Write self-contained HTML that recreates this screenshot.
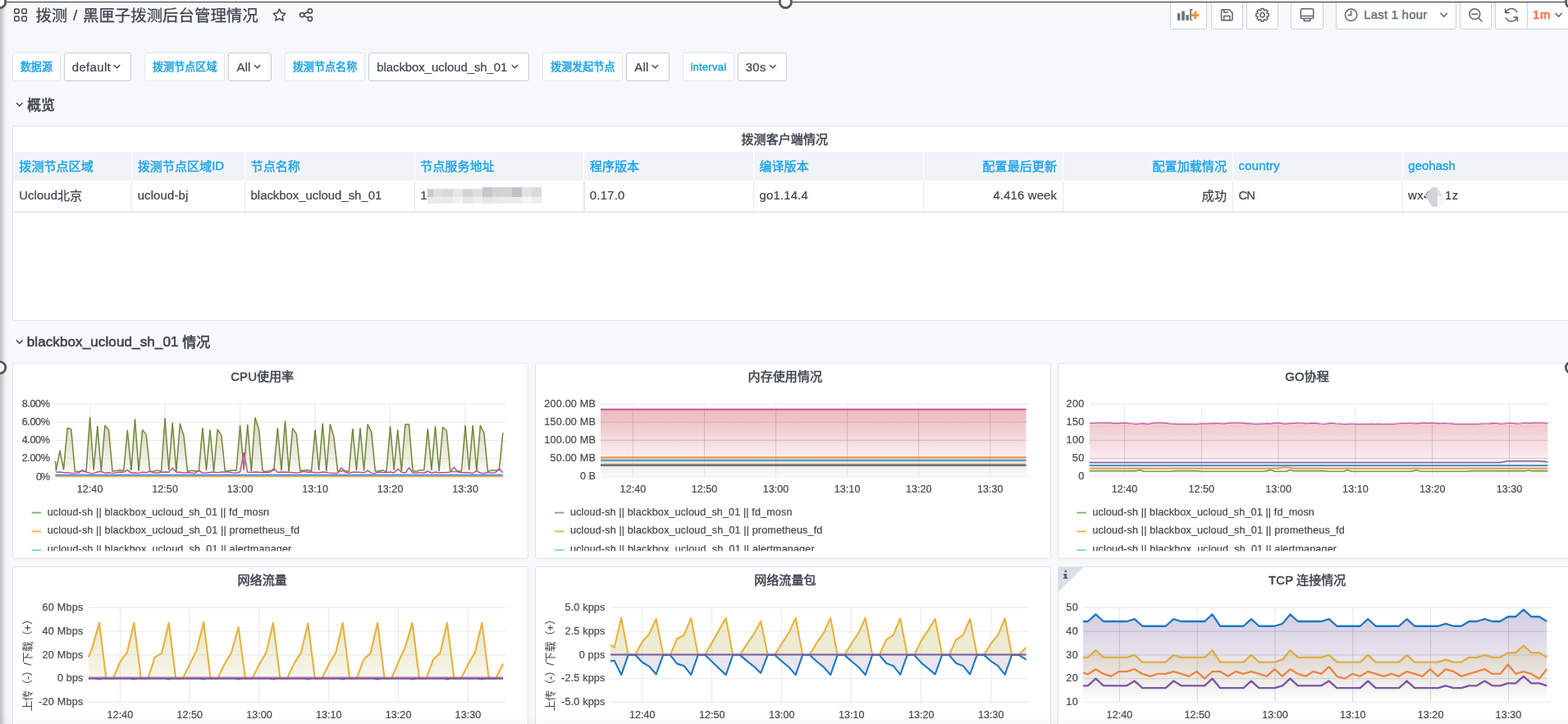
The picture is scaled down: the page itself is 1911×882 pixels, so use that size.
<!DOCTYPE html>
<html lang="zh"><head><meta charset="utf-8"><title>拨测 / 黑匣子拨测后台管理情况 - Grafana</title><style>
html,body{margin:0;padding:0;width:1911px;height:882px;overflow:hidden}
body{width:1911px;height:882px;overflow:hidden;background:#f7f8fa;font-family:"Liberation Sans","Noto Sans CJK SC",sans-serif;color:#464c54;position:relative}
#app{position:absolute;left:0;top:0;width:1911px;height:882px;overflow:hidden}
div,span,header,section,nav,button,table{box-sizing:border-box}
.ov{position:absolute;left:0;top:0;overflow:visible;will-change:transform}
svg text{font-family:"Liberation Sans","Noto Sans CJK SC",sans-serif}
.box{position:absolute}
.panel{position:absolute;background:#fff;border:1px solid #dfe4eb;border-radius:3px}
.panel>.ov,.btn>.ov,.vlabel>.ov,.vdrop>.ov{left:-1px;top:-1px}
.btn{position:absolute;background:#fff;border:1px solid #c9d2dc;border-radius:3px}
.vlabel{position:absolute;background:#fff;border:1px solid #e0e6ee;border-radius:3px}
.vdrop{position:absolute;background:#fff;border:1px solid #c3ccd6;border-radius:3px}
.th{position:absolute;background:#f0f4f9}
.td{position:absolute}
</style></head><body>
<div id="app">

<header class="box" style="left:0.00px;top:3.00px;width:1420.00px;height:40.00px;"><svg class="ov" width="1420.00" height="40.00" viewBox="0.00 3.00 1420.00 40.00"><rect x="17.70" y="10.90" width="5.4" height="5.4" rx="1.0" fill="none" stroke="#3f454e" stroke-width="1.45"/><rect x="26.90" y="10.90" width="5.4" height="5.4" rx="1.0" fill="none" stroke="#3f454e" stroke-width="1.45"/><rect x="17.70" y="20.00" width="5.4" height="5.4" rx="1.0" fill="none" stroke="#3f454e" stroke-width="1.45"/><rect x="26.90" y="20.00" width="5.4" height="5.4" rx="1.0" fill="none" stroke="#3f454e" stroke-width="1.45"/><text x="43.40" y="25.87" font-size="19.43" fill="#3f454e" textLength="38.86" lengthAdjust="spacing" stroke="#3f454e" stroke-width="0.25">拨测</text><text x="82.26" y="24.70" font-size="19.00" fill="#3f454e" textLength="18.71" lengthAdjust="spacing" stroke="#3f454e" stroke-width="0.22" xml:space="preserve" style="white-space:pre"> / </text><text x="100.97" y="25.87" font-size="19.43" fill="#3f454e" textLength="213.73" lengthAdjust="spacing" stroke="#3f454e" stroke-width="0.25">黑匣子拨测后台管理情况</text><path d="M340.50 11.10 L342.79 15.64 L347.82 16.42 L344.21 20.01 L345.03 25.03 L340.50 22.70 L335.97 25.03 L336.79 20.01 L333.18 16.42 L338.21 15.64Z" fill="none" stroke="#3f454e" stroke-width="1.5" stroke-linejoin="round"/><g fill="none" stroke="#3f454e" stroke-width="1.5"><circle cx="377.9" cy="13.4" r="2.6"/><circle cx="368.1" cy="18.1" r="2.6"/><circle cx="377.9" cy="22.9" r="2.6"/><path d="M370.4 17L375.6 14.5M370.4 19.2L375.6 21.8"/></g></svg></header>
<button class="btn" style="left:1426.00px;top:1.00px;width:45.00px;height:35.00px;"><svg class="ov" width="45.00" height="35.00" viewBox="1426.00 1.00 45.00 35.00"><rect x="1435.00" y="16.20" width="3.40" height="8.60" fill="#6b727d"/><rect x="1440.20" y="13.60" width="3.60" height="11.20" fill="#6b727d"/><rect x="1445.40" y="18.30" width="3.40" height="6.50" fill="#6b727d"/><rect x="1450.10" y="11.00" width="3.30" height="13.80" fill="#6b727d"/><rect x="1451.9" y="12.6" width="10" height="11.4" fill="#fff"/><linearGradient id="gpl" x1="0" y1="0" x2="1" y2="0"><stop offset="0" stop-color="#ff7f27"/><stop offset="1" stop-color="#f9a83a"/></linearGradient><path d="M1455.3 13.8h3.1v3.1h3.1v3.1h-3.1v3.1h-3.1v-3.1h-3.1v-3.1h3.1z" fill="url(#gpl)"/></svg></button>
<button class="btn" style="left:1476.00px;top:1.00px;width:39.00px;height:35.00px;"><svg class="ov" width="39.00" height="35.00" viewBox="1476.00 1.00 39.00 35.00"><g fill="none" stroke="#5b626d" stroke-width="1.5" stroke-linejoin="round"><path d="M1489.4 11.8H1498.2L1502 15.6V23.9a.8.8 0 0 1-.8.8H1489.4a.8.8 0 0 1-.8-.8V12.6a.8.8 0 0 1 .8-.8Z"/><path d="M1491.6 24.6V19.6H1499V24.6M1491.6 12V14.9H1496.6"/></g></svg></button>
<button class="btn" style="left:1519.00px;top:1.00px;width:39.00px;height:35.00px;"><svg class="ov" width="39.00" height="35.00" viewBox="1519.00 1.00 39.00 35.00"><g fill="none" stroke="#5b626d" stroke-width="1.5" stroke-linejoin="round"><path d="M1546.24 16.63 L1546.24 19.77 L1544.20 20.09 L1543.86 20.89 L1545.08 22.56 L1542.86 24.78 L1541.19 23.56 L1540.39 23.90 L1540.07 25.94 L1536.93 25.94 L1536.61 23.90 L1535.81 23.56 L1534.14 24.78 L1531.92 22.56 L1533.14 20.89 L1532.80 20.09 L1530.76 19.77 L1530.76 16.63 L1532.80 16.31 L1533.14 15.51 L1531.92 13.84 L1534.14 11.62 L1535.81 12.84 L1536.61 12.50 L1536.93 10.46 L1540.07 10.46 L1540.39 12.50 L1541.19 12.84 L1542.86 11.62 L1545.08 13.84 L1543.86 15.51 L1544.20 16.31Z"/><circle cx="1538.5" cy="18.2" r="2.7"/></g></svg></button>
<button class="btn" style="left:1573.00px;top:1.00px;width:40.00px;height:35.00px;"><svg class="ov" width="40.00" height="35.00" viewBox="1573.00 1.00 40.00 35.00"><g fill="none" stroke="#5b626d" stroke-width="1.5" stroke-linejoin="round"><rect x="1585.3" y="10.8" width="15.4" height="11.8" rx="1.6"/><path d="M1585.3 19.6H1600.7M1589.4 22.6V25.4H1596.6V22.6"/></g></svg></button>
<button class="btn" style="left:1628.00px;top:1.00px;width:147.00px;height:35.00px;"><svg class="ov" width="147.00" height="35.00" viewBox="1628.00 1.00 147.00 35.00"><g fill="none" stroke="#5b626d" stroke-width="1.5" stroke-linecap="round"><circle cx="1646.6" cy="18.2" r="7.2"/><path d="M1646.6 13.6V18.4H1643.2"/></g><text x="1662.20" y="22.90" font-size="15.00" fill="#6b7280" textLength="77.00" lengthAdjust="spacing" stroke="#6b7280" stroke-width="0.55" xml:space="preserve" style="white-space:pre">Last 1 hour</text><path d="M1755.90 16.20 L1759.70 20.20 L1763.50 16.20" fill="none" stroke="#5b626d" stroke-width="1.50" stroke-linecap="round" stroke-linejoin="round"/></svg></button>
<button class="btn" style="left:1779.00px;top:1.00px;width:39.00px;height:35.00px;"><svg class="ov" width="39.00" height="35.00" viewBox="1779.00 1.00 39.00 35.00"><g fill="none" stroke="#5b626d" stroke-width="1.5" stroke-linecap="round"><circle cx="1797.3" cy="17.2" r="6.4"/><path d="M1793.9 17.2H1800.7M1802 22L1805.8 25.8"/></g></svg></button>
<button class="btn" style="left:1822.00px;top:1.00px;width:98.00px;height:35.00px;"><svg class="ov" width="98.00" height="35.00" viewBox="1822.00 1.00 98.00 35.00"><g fill="none" stroke="#5b626d" stroke-width="1.5" stroke-linecap="round" stroke-linejoin="round"><path d="M1835.3 15.2A7.2 7.2 0 0 1 1848.6 14.6M1848.7 21.2A7.2 7.2 0 0 1 1835.4 21.8"/><path d="M1834.6 10.9V15.4H1839.1M1849.4 25.5V21H1844.9"/></g><path d="M1861.4 0V36" stroke="#c9d2dc" stroke-width="1"/><text x="1868.00" y="23.20" font-size="15.00" fill="#ff6b3d" textLength="21.60" lengthAdjust="spacing" stroke="#ff6b3d" stroke-width="0.55" xml:space="preserve" style="white-space:pre">1m</text><path d="M1895.80 16.30 L1899.60 20.30 L1903.40 16.30" fill="none" stroke="#5b626d" stroke-width="1.50" stroke-linecap="round" stroke-linejoin="round"/></svg></button>
<div class="vlabel" style="left:15.00px;top:64.00px;width:59.00px;height:35.00px;"><svg class="ov" width="59.00" height="35.00" viewBox="15.00 64.00 59.00 35.00"><text x="24.70" y="85.69" font-size="13.10" fill="#21a3e8" textLength="39.30" lengthAdjust="spacing" stroke="#21a3e8" stroke-width="0.50">数据源</text></svg></div>
<div class="vdrop" style="left:78.00px;top:64.00px;width:82.00px;height:35.00px;"><svg class="ov" width="82.00" height="35.00" viewBox="78.00 64.00 82.00 35.00"><text x="87.80" y="86.60" font-size="14.90" fill="#3f454e" textLength="46.90" lengthAdjust="spacing" stroke="#3f454e" stroke-width="0.22" xml:space="preserve" style="white-space:pre">default</text><path d="M139.30 79.55 L142.60 82.85 L145.90 79.55" fill="none" stroke="#3f454e" stroke-width="1.35" stroke-linecap="round" stroke-linejoin="round"/></svg></div>
<div class="vlabel" style="left:176.00px;top:64.00px;width:98.00px;height:35.00px;"><svg class="ov" width="98.00" height="35.00" viewBox="176.00 64.00 98.00 35.00"><text x="185.90" y="85.69" font-size="13.10" fill="#21a3e8" textLength="78.60" lengthAdjust="spacing" stroke="#21a3e8" stroke-width="0.50">拨测节点区域</text></svg></div>
<div class="vdrop" style="left:278.00px;top:64.00px;width:53.00px;height:35.00px;"><svg class="ov" width="53.00" height="35.00" viewBox="278.00 64.00 53.00 35.00"><text x="288.40" y="86.60" font-size="14.90" fill="#3f454e" textLength="16.90" lengthAdjust="spacing" stroke="#3f454e" stroke-width="0.22" xml:space="preserve" style="white-space:pre">All</text><path d="M310.20 79.55 L313.50 82.85 L316.80 79.55" fill="none" stroke="#3f454e" stroke-width="1.35" stroke-linecap="round" stroke-linejoin="round"/></svg></div>
<div class="vlabel" style="left:347.00px;top:64.00px;width:98.00px;height:35.00px;"><svg class="ov" width="98.00" height="35.00" viewBox="347.00 64.00 98.00 35.00"><text x="356.70" y="85.69" font-size="13.10" fill="#21a3e8" textLength="78.60" lengthAdjust="spacing" stroke="#21a3e8" stroke-width="0.50">拨测节点名称</text></svg></div>
<div class="vdrop" style="left:449.00px;top:64.00px;width:196.00px;height:35.00px;"><svg class="ov" width="196.00" height="35.00" viewBox="449.00 64.00 196.00 35.00"><text x="459.20" y="86.60" font-size="14.90" fill="#3f454e" textLength="159.20" lengthAdjust="spacing" stroke="#3f454e" stroke-width="0.22" xml:space="preserve" style="white-space:pre">blackbox_ucloud_sh_01</text><path d="M624.10 79.55 L627.40 82.85 L630.70 79.55" fill="none" stroke="#3f454e" stroke-width="1.35" stroke-linecap="round" stroke-linejoin="round"/></svg></div>
<div class="vlabel" style="left:661.00px;top:64.00px;width:98.00px;height:35.00px;"><svg class="ov" width="98.00" height="35.00" viewBox="661.00 64.00 98.00 35.00"><text x="670.90" y="85.69" font-size="13.10" fill="#21a3e8" textLength="78.60" lengthAdjust="spacing" stroke="#21a3e8" stroke-width="0.50">拨测发起节点</text></svg></div>
<div class="vdrop" style="left:763.00px;top:64.00px;width:53.00px;height:35.00px;"><svg class="ov" width="53.00" height="35.00" viewBox="763.00 64.00 53.00 35.00"><text x="773.30" y="86.60" font-size="14.90" fill="#3f454e" textLength="16.90" lengthAdjust="spacing" stroke="#3f454e" stroke-width="0.22" xml:space="preserve" style="white-space:pre">All</text><path d="M795.10 79.55 L798.40 82.85 L801.70 79.55" fill="none" stroke="#3f454e" stroke-width="1.35" stroke-linecap="round" stroke-linejoin="round"/></svg></div>
<div class="vlabel" style="left:832.00px;top:64.00px;width:63.00px;height:35.00px;"><svg class="ov" width="63.00" height="35.00" viewBox="832.00 64.00 63.00 35.00"><text x="841.40" y="85.60" font-size="12.90" fill="#21a3e8" textLength="43.60" lengthAdjust="spacing" stroke="#21a3e8" stroke-width="0.50" xml:space="preserve" style="white-space:pre">interval</text></svg></div>
<div class="vdrop" style="left:899.00px;top:64.00px;width:60.00px;height:35.00px;"><svg class="ov" width="60.00" height="35.00" viewBox="899.00 64.00 60.00 35.00"><text x="908.80" y="86.60" font-size="14.90" fill="#3f454e" textLength="24.60" lengthAdjust="spacing" stroke="#3f454e" stroke-width="0.22" xml:space="preserve" style="white-space:pre">30s</text><path d="M938.60 79.55 L941.90 82.85 L945.20 79.55" fill="none" stroke="#3f454e" stroke-width="1.35" stroke-linecap="round" stroke-linejoin="round"/></svg></div>
<div class="box" style="left:15.00px;top:112.00px;width:600.00px;height:30.00px;"><svg class="ov" width="600.00" height="30.00" viewBox="15.00 112.00 600.00 30.00"><path d="M20.50 125.70 L23.80 129.10 L27.10 125.70" fill="none" stroke="#3f454e" stroke-width="1.50" stroke-linecap="round" stroke-linejoin="round"/><text x="33.00" y="133.62" font-size="17.00" fill="#3f454e" textLength="34.00" lengthAdjust="spacing" stroke="#3f454e" stroke-width="0.60">概览</text></svg></div>
<div class="box" style="left:15.00px;top:401.00px;width:600.00px;height:30.00px;"><svg class="ov" width="600.00" height="30.00" viewBox="15.00 401.00 600.00 30.00"><path d="M20.50 414.90 L23.80 418.30 L27.10 414.90" fill="none" stroke="#3f454e" stroke-width="1.50" stroke-linecap="round" stroke-linejoin="round"/><text x="32.70" y="422.10" font-size="17.00" fill="#3f454e" textLength="189.60" lengthAdjust="spacing" stroke="#3f454e" stroke-width="0.60" xml:space="preserve" style="white-space:pre">blackbox_ucloud_sh_01 </text><text x="222.30" y="423.12" font-size="17.00" fill="#3f454e" textLength="34.00" lengthAdjust="spacing" stroke="#3f454e" stroke-width="0.60">情况</text></svg></div>
<section class="panel" style="left:15.00px;top:153.00px;width:1906.00px;height:238.00px;"><div class="th" style="left:0.00px;top:30.60px;width:144.35px;height:35.60px"></div><div class="th" style="left:145.25px;top:30.60px;width:137.05px;height:35.60px"></div><div class="box" style="left:144.15px;top:66.80px;width:1.3px;height:36.50px;background:#e4e9f0"></div><div class="th" style="left:283.20px;top:30.60px;width:205.70px;height:35.60px"></div><div class="box" style="left:282.10px;top:66.80px;width:1.3px;height:36.50px;background:#e4e9f0"></div><div class="th" style="left:489.80px;top:30.60px;width:205.70px;height:35.60px"></div><div class="box" style="left:488.70px;top:66.80px;width:1.3px;height:36.50px;background:#e4e9f0"></div><div class="th" style="left:696.40px;top:30.60px;width:205.70px;height:35.60px"></div><div class="box" style="left:695.30px;top:66.80px;width:1.3px;height:36.50px;background:#e4e9f0"></div><div class="th" style="left:903.00px;top:30.60px;width:205.70px;height:35.60px"></div><div class="box" style="left:901.90px;top:66.80px;width:1.3px;height:36.50px;background:#e4e9f0"></div><div class="th" style="left:1109.60px;top:30.60px;width:169.60px;height:35.60px"></div><div class="box" style="left:1108.50px;top:66.80px;width:1.3px;height:36.50px;background:#e4e9f0"></div><div class="th" style="left:1280.10px;top:30.60px;width:206.10px;height:35.60px"></div><div class="box" style="left:1279.00px;top:66.80px;width:1.3px;height:36.50px;background:#e4e9f0"></div><div class="th" style="left:1487.10px;top:30.60px;width:205.90px;height:35.60px"></div><div class="box" style="left:1486.00px;top:66.80px;width:1.3px;height:36.50px;background:#e4e9f0"></div><div class="th" style="left:1693.90px;top:30.60px;width:206.10px;height:35.60px"></div><div class="box" style="left:1692.80px;top:66.80px;width:1.3px;height:36.50px;background:#e4e9f0"></div><div class="box" style="left:0;top:103.30px;width:100%;height:1.6px;background:#e6ebf1"></div><svg class="ov" width="1906.00" height="238.00" viewBox="15.00 153.00 1906.00 238.00"><text x="903.45" y="175.41" font-size="15.10" fill="#3f454e" textLength="105.70" lengthAdjust="spacing" stroke="#3f454e" stroke-width="0.50">拨测客户端情况</text><text x="23.30" y="207.60" font-size="15.08" fill="#21a3e8" textLength="90.48" lengthAdjust="spacing" stroke="#21a3e8" stroke-width="0.45">拨测节点区域</text><text x="23.30" y="242.80" font-size="14.90" fill="#3f454e" textLength="46.64" lengthAdjust="spacing" stroke="#3f454e" stroke-width="0.22" xml:space="preserve" style="white-space:pre">Ucloud</text><text x="69.94" y="243.70" font-size="15.08" fill="#3f454e" textLength="30.16" lengthAdjust="spacing" stroke="#3f454e" stroke-width="0.22">北京</text><text x="167.65" y="207.60" font-size="15.08" fill="#21a3e8" textLength="90.48" lengthAdjust="spacing" stroke="#21a3e8" stroke-width="0.45">拨测节点区域</text><text x="258.13" y="206.70" font-size="14.90" fill="#21a3e8" textLength="14.82" lengthAdjust="spacing" stroke="#21a3e8" stroke-width="0.45" xml:space="preserve" style="white-space:pre">ID</text><text x="167.65" y="242.80" font-size="14.90" fill="#3f454e" textLength="61.60" lengthAdjust="spacing" stroke="#3f454e" stroke-width="0.22" xml:space="preserve" style="white-space:pre">ucloud-bj</text><text x="305.60" y="207.60" font-size="15.08" fill="#21a3e8" textLength="60.32" lengthAdjust="spacing" stroke="#21a3e8" stroke-width="0.45">节点名称</text><text x="305.60" y="242.80" font-size="14.90" fill="#3f454e" textLength="159.60" lengthAdjust="spacing" stroke="#3f454e" stroke-width="0.22" xml:space="preserve" style="white-space:pre">blackbox_ucloud_sh_01</text><text x="512.20" y="207.60" font-size="15.08" fill="#21a3e8" textLength="90.48" lengthAdjust="spacing" stroke="#21a3e8" stroke-width="0.45">节点服务地址</text><text x="512.20" y="242.80" font-size="14.90" fill="#3f454e" stroke="#3f454e" stroke-width="0.22" xml:space="preserve" style="white-space:pre">1</text><text x="718.80" y="207.60" font-size="15.08" fill="#21a3e8" textLength="60.32" lengthAdjust="spacing" stroke="#21a3e8" stroke-width="0.45">程序版本</text><text x="718.80" y="242.80" font-size="14.90" fill="#3f454e" textLength="42.60" lengthAdjust="spacing" stroke="#3f454e" stroke-width="0.22" xml:space="preserve" style="white-space:pre">0.17.0</text><text x="925.40" y="207.60" font-size="15.08" fill="#21a3e8" textLength="60.32" lengthAdjust="spacing" stroke="#21a3e8" stroke-width="0.45">编译版本</text><text x="925.40" y="242.80" font-size="14.90" fill="#3f454e" textLength="59.40" lengthAdjust="spacing" stroke="#3f454e" stroke-width="0.22" xml:space="preserve" style="white-space:pre">go1.14.4</text><text x="1197.52" y="207.60" font-size="15.08" fill="#21a3e8" textLength="90.48" lengthAdjust="spacing" stroke="#21a3e8" stroke-width="0.45">配置最后更新</text><text x="1210.40" y="242.80" font-size="14.90" fill="#3f454e" textLength="77.60" lengthAdjust="spacing" stroke="#3f454e" stroke-width="0.22" xml:space="preserve" style="white-space:pre">4.416 week</text><text x="1404.52" y="207.60" font-size="15.08" fill="#21a3e8" textLength="90.48" lengthAdjust="spacing" stroke="#21a3e8" stroke-width="0.45">配置加载情况</text><text x="1464.84" y="243.70" font-size="15.08" fill="#3f454e" textLength="30.16" lengthAdjust="spacing" stroke="#3f454e" stroke-width="0.22">成功</text><text x="1509.50" y="206.70" font-size="14.90" fill="#21a3e8" textLength="50.20" lengthAdjust="spacing" stroke="#21a3e8" stroke-width="0.45" xml:space="preserve" style="white-space:pre">country</text><text x="1509.50" y="242.80" font-size="14.90" fill="#3f454e" textLength="20.60" lengthAdjust="spacing" stroke="#3f454e" stroke-width="0.22" xml:space="preserve" style="white-space:pre">CN</text><text x="1716.30" y="206.70" font-size="14.90" fill="#21a3e8" textLength="57.60" lengthAdjust="spacing" stroke="#21a3e8" stroke-width="0.45" xml:space="preserve" style="white-space:pre">geohash</text><text x="1716.00" y="242.80" font-size="14.90" fill="#3f454e" textLength="27.60" lengthAdjust="spacing" stroke="#3f454e" stroke-width="0.22" xml:space="preserve" style="white-space:pre">wx4</text><text x="1761.00" y="242.80" font-size="14.90" fill="#3f454e" textLength="16.20" lengthAdjust="spacing" stroke="#3f454e" stroke-width="0.22" xml:space="preserve" style="white-space:pre">1z</text><path d="M1745.4 228.2H1751.9V251.8H1745.4L1736.8 238.8Z" fill="#d2d3d6"/><path d="M1751.9 228.2L1759 239.4H1751.9Z" fill="#e3e4e6"/><path d="M1751.9 239.4H1759L1763 246L1752.4 254Z" fill="#f8f8f9"/><path d="M1736.8 238.8L1742.5 230.5L1745.4 228.2V238.8Z" fill="#d2d3d6" opacity=".55"/><rect x="520.90" y="230.20" width="7.15" height="9.95" fill="#c8c9cc"/><rect x="520.90" y="240.1" width="7.15" height="7.9" fill="#e8e9ea"/><rect x="528.00" y="230.20" width="12.05" height="9.95" fill="#dddee0"/><rect x="528.00" y="240.1" width="12.05" height="7.9" fill="#ebebec"/><rect x="540.00" y="230.20" width="12.05" height="9.95" fill="#d8d9db"/><rect x="540.00" y="240.1" width="12.05" height="7.9" fill="#e9eaeb"/><rect x="552.00" y="230.20" width="12.05" height="9.95" fill="#e6e7e9"/><rect x="552.00" y="240.1" width="12.05" height="7.9" fill="#f3f3f4"/><rect x="564.00" y="230.20" width="12.05" height="9.95" fill="#d3d4d7"/><rect x="564.00" y="240.1" width="12.05" height="7.9" fill="#e5e6e8"/><rect x="576.00" y="230.20" width="11.95" height="9.95" fill="#dedfe1"/><rect x="576.00" y="240.1" width="11.95" height="7.9" fill="#efeff0"/><rect x="587.90" y="228.10" width="12.15" height="12.05" fill="#c5c6ca"/><rect x="587.90" y="240.1" width="12.15" height="7.9" fill="#e4e5e7"/><rect x="600.00" y="228.10" width="12.05" height="12.05" fill="#d2d3d6"/><rect x="600.00" y="240.1" width="12.05" height="7.9" fill="#e8e9ea"/><rect x="612.00" y="228.10" width="12.05" height="12.05" fill="#d3d4d6"/><rect x="612.00" y="240.1" width="12.05" height="7.9" fill="#ececed"/><rect x="624.00" y="228.10" width="12.05" height="12.05" fill="#bfc3c7"/><rect x="624.00" y="240.1" width="12.05" height="7.9" fill="#ececed"/><rect x="636.00" y="228.10" width="11.95" height="12.05" fill="#e2e3e5"/><rect x="636.00" y="240.1" width="11.95" height="7.9" fill="#f6f6f7"/><rect x="647.90" y="228.10" width="12.05" height="12.05" fill="#d9dadc"/><rect x="647.90" y="240.1" width="12.05" height="7.9" fill="#ededee"/></svg></section>
<section class="panel" style="left:15.00px;top:442.00px;width:629.00px;height:239.00px;overflow:hidden;"><svg class="ov" width="629.00" height="239.00" viewBox="15.00 442.00 629.00 239.00"><text x="281.20" y="463.70" font-size="14.90" fill="#3f454e" textLength="31.76" lengthAdjust="spacing" stroke="#3f454e" stroke-width="0.50" xml:space="preserve" style="white-space:pre">CPU</text><text x="312.96" y="463.90" font-size="15.08" fill="#3f454e" textLength="45.24" lengthAdjust="spacing" stroke="#3f454e" stroke-width="0.50">使用率</text><path d="M67.35 492.00H616.80M67.35 514.20H616.80M67.35 536.45H616.80M67.35 558.70H616.80M67.35 580.90H616.80M109.60 492.00V580.90M201.10 492.00V580.90M292.60 492.00V580.90M384.10 492.00V580.90M475.60 492.00V580.90M567.10 492.00V580.90" stroke="#e7e8ea" stroke-width="1" fill="none"/><clipPath id="cp592"><rect x="66.35" y="489.00" width="551.45" height="94.90"/></clipPath><g clip-path="url(#cp592)"><linearGradient id="gcpu" gradientUnits="userSpaceOnUse" x1="0" y1="502.0" x2="0" y2="580.9"><stop offset="0" stop-color="#8a7a3a" stop-opacity=".36"/><stop offset="1" stop-color="#8a7a3a" stop-opacity=".03"/></linearGradient><path d="M67.55 561.79 L68.42 573.12 L73.00 549.01 L77.57 572.01 L82.15 521.23 L86.72 523.12 L91.30 574.23 L95.88 574.66 L100.45 573.66 L105.02 574.70 L109.60 508.67 L114.17 572.13 L118.75 519.45 L123.32 573.57 L127.90 518.34 L132.47 523.78 L137.05 574.29 L141.62 573.39 L146.20 572.68 L150.78 573.51 L155.35 524.23 L159.93 572.45 L164.50 510.89 L169.07 573.31 L173.65 523.78 L178.22 529.34 L182.80 574.53 L187.38 574.10 L191.95 572.97 L196.52 574.39 L201.10 509.89 L205.68 572.50 L210.25 515.34 L214.82 573.94 L219.40 516.11 L223.97 530.89 L228.55 574.33 L233.12 573.28 L237.70 573.84 L242.28 574.09 L246.85 521.67 L251.43 572.33 L256.00 523.89 L260.57 573.83 L265.15 523.12 L269.73 530.12 L274.30 573.51 L278.88 573.62 L283.45 572.84 L288.02 573.17 L292.60 518.67 L297.18 572.19 L301.75 517.56 L306.32 573.95 L310.90 509.00 L315.48 522.78 L320.05 573.70 L324.62 574.70 L329.20 573.30 L333.77 573.09 L338.35 521.89 L342.93 572.57 L347.50 513.11 L352.08 573.84 L356.65 521.89 L361.23 528.56 L365.80 573.77 L370.38 572.92 L374.95 572.69 L379.52 573.73 L384.10 524.00 L388.67 572.45 L393.25 516.34 L397.83 573.61 L402.40 517.11 L406.98 532.78 L411.55 574.16 L416.12 573.93 L420.70 573.30 L425.27 574.74 L429.85 522.67 L434.42 572.54 L439.00 521.89 L443.58 573.04 L448.15 517.11 L452.73 526.00 L457.30 574.24 L461.88 573.92 L466.45 572.85 L471.02 574.61 L475.60 519.67 L480.17 571.88 L484.75 523.89 L489.33 573.85 L493.90 517.11 L498.48 517.11 L503.05 573.87 L507.62 573.99 L512.20 572.82 L516.77 572.66 L521.35 522.67 L525.92 572.29 L530.50 519.67 L535.08 573.62 L539.65 520.45 L544.23 524.34 L548.80 574.20 L553.38 574.78 L557.95 573.86 L562.52 573.97 L567.10 518.45 L571.68 572.16 L576.25 518.45 L580.83 573.87 L585.40 518.45 L589.98 527.67 L594.55 574.67 L599.12 572.79 L603.70 573.05 L608.27 572.84 L612.85 527.23 L612.85 580.90 L67.55 580.90 Z" fill="url(#gcpu)"/><path d="M67.55 561.79 L68.42 573.12 L73.00 549.01 L77.57 572.01 L82.15 521.23 L86.72 523.12 L91.30 574.23 L95.88 574.66 L100.45 573.66 L105.02 574.70 L109.60 508.67 L114.17 572.13 L118.75 519.45 L123.32 573.57 L127.90 518.34 L132.47 523.78 L137.05 574.29 L141.62 573.39 L146.20 572.68 L150.78 573.51 L155.35 524.23 L159.93 572.45 L164.50 510.89 L169.07 573.31 L173.65 523.78 L178.22 529.34 L182.80 574.53 L187.38 574.10 L191.95 572.97 L196.52 574.39 L201.10 509.89 L205.68 572.50 L210.25 515.34 L214.82 573.94 L219.40 516.11 L223.97 530.89 L228.55 574.33 L233.12 573.28 L237.70 573.84 L242.28 574.09 L246.85 521.67 L251.43 572.33 L256.00 523.89 L260.57 573.83 L265.15 523.12 L269.73 530.12 L274.30 573.51 L278.88 573.62 L283.45 572.84 L288.02 573.17 L292.60 518.67 L297.18 572.19 L301.75 517.56 L306.32 573.95 L310.90 509.00 L315.48 522.78 L320.05 573.70 L324.62 574.70 L329.20 573.30 L333.77 573.09 L338.35 521.89 L342.93 572.57 L347.50 513.11 L352.08 573.84 L356.65 521.89 L361.23 528.56 L365.80 573.77 L370.38 572.92 L374.95 572.69 L379.52 573.73 L384.10 524.00 L388.67 572.45 L393.25 516.34 L397.83 573.61 L402.40 517.11 L406.98 532.78 L411.55 574.16 L416.12 573.93 L420.70 573.30 L425.27 574.74 L429.85 522.67 L434.42 572.54 L439.00 521.89 L443.58 573.04 L448.15 517.11 L452.73 526.00 L457.30 574.24 L461.88 573.92 L466.45 572.85 L471.02 574.61 L475.60 519.67 L480.17 571.88 L484.75 523.89 L489.33 573.85 L493.90 517.11 L498.48 517.11 L503.05 573.87 L507.62 573.99 L512.20 572.82 L516.77 572.66 L521.35 522.67 L525.92 572.29 L530.50 519.67 L535.08 573.62 L539.65 520.45 L544.23 524.34 L548.80 574.20 L553.38 574.78 L557.95 573.86 L562.52 573.97 L567.10 518.45 L571.68 572.16 L576.25 518.45 L580.83 573.87 L585.40 518.45 L589.98 527.67 L594.55 574.67 L599.12 572.79 L603.70 573.05 L608.27 572.84 L612.85 527.23" fill="none" stroke="#b3a352" stroke-opacity=".85" stroke-width="1.7" stroke-linejoin="round"/><path d="M67.55 561.79 L68.42 573.12 L73.00 549.01 L77.57 572.01 L82.15 521.23 L86.72 523.12 L91.30 574.23 L95.88 574.66 L100.45 573.66 L105.02 574.70 L109.60 508.67 L114.17 572.13 L118.75 519.45 L123.32 573.57 L127.90 518.34 L132.47 523.78 L137.05 574.29 L141.62 573.39 L146.20 572.68 L150.78 573.51 L155.35 524.23 L159.93 572.45 L164.50 510.89 L169.07 573.31 L173.65 523.78 L178.22 529.34 L182.80 574.53 L187.38 574.10 L191.95 572.97 L196.52 574.39 L201.10 509.89 L205.68 572.50 L210.25 515.34 L214.82 573.94 L219.40 516.11 L223.97 530.89 L228.55 574.33 L233.12 573.28 L237.70 573.84 L242.28 574.09 L246.85 521.67 L251.43 572.33 L256.00 523.89 L260.57 573.83 L265.15 523.12 L269.73 530.12 L274.30 573.51 L278.88 573.62 L283.45 572.84 L288.02 573.17 L292.60 518.67 L297.18 572.19 L301.75 517.56 L306.32 573.95 L310.90 509.00 L315.48 522.78 L320.05 573.70 L324.62 574.70 L329.20 573.30 L333.77 573.09 L338.35 521.89 L342.93 572.57 L347.50 513.11 L352.08 573.84 L356.65 521.89 L361.23 528.56 L365.80 573.77 L370.38 572.92 L374.95 572.69 L379.52 573.73 L384.10 524.00 L388.67 572.45 L393.25 516.34 L397.83 573.61 L402.40 517.11 L406.98 532.78 L411.55 574.16 L416.12 573.93 L420.70 573.30 L425.27 574.74 L429.85 522.67 L434.42 572.54 L439.00 521.89 L443.58 573.04 L448.15 517.11 L452.73 526.00 L457.30 574.24 L461.88 573.92 L466.45 572.85 L471.02 574.61 L475.60 519.67 L480.17 571.88 L484.75 523.89 L489.33 573.85 L493.90 517.11 L498.48 517.11 L503.05 573.87 L507.62 573.99 L512.20 572.82 L516.77 572.66 L521.35 522.67 L525.92 572.29 L530.50 519.67 L535.08 573.62 L539.65 520.45 L544.23 524.34 L548.80 574.20 L553.38 574.78 L557.95 573.86 L562.52 573.97 L567.10 518.45 L571.68 572.16 L576.25 518.45 L580.83 573.87 L585.40 518.45 L589.98 527.67 L594.55 574.67 L599.12 572.79 L603.70 573.05 L608.27 572.84 L612.85 527.23" fill="none" stroke="#4d803a" stroke-width="0.9" stroke-linejoin="round"/><path d="M68.42 575.17 L73.00 574.91 L77.57 575.85 L82.15 575.82 L86.72 576.52 L91.30 576.50 L95.88 576.07 L100.45 572.57 L105.02 575.20 L109.60 576.39 L114.17 576.64 L118.75 574.99 L123.32 574.23 L127.90 576.42 L132.47 575.71 L137.05 576.63 L141.62 575.74 L146.20 574.94 L150.78 575.14 L155.35 572.57 L159.93 576.21 L164.50 576.03 L169.07 576.38 L173.65 575.30 L178.22 575.73 L182.80 574.01 L187.38 576.09 L191.95 576.28 L196.52 575.23 L201.10 574.93 L205.68 575.16 L210.25 570.34 L214.82 575.22 L219.40 575.36 L223.97 576.27 L228.55 575.76 L233.12 576.05 L237.70 576.63 L242.28 573.12 L246.85 576.18 L251.43 576.22 L256.00 575.45 L260.57 574.98 L265.15 575.88 L269.73 575.01 L274.30 574.92 L278.88 574.98 L283.45 576.03 L288.02 576.29 L292.60 574.79 L297.18 551.45 L301.75 575.34 L306.32 575.57 L310.90 575.08 L315.48 575.18 L320.05 575.82 L324.62 575.52 L329.20 575.26 L333.77 570.90 L338.35 575.50 L342.93 575.06 L347.50 575.29 L352.08 575.34 L356.65 575.83 L361.23 576.36 L365.80 575.27 L370.38 574.23 L374.95 575.25 L379.52 574.95 L384.10 575.97 L388.67 575.96 L393.25 574.99 L397.83 575.39 L402.40 576.37 L406.98 576.45 L411.55 576.41 L416.12 569.79 L420.70 575.24 L425.27 576.42 L429.85 575.21 L434.42 574.93 L439.00 575.51 L443.58 576.05 L448.15 573.12 L452.73 576.44 L457.30 576.65 L461.88 574.95 L466.45 575.52 L471.02 575.74 L475.60 575.02 L480.17 575.91 L484.75 571.45 L489.33 575.21 L493.90 576.30 L498.48 569.79 L503.05 576.16 L507.62 576.25 L512.20 575.63 L516.77 576.22 L521.35 574.01 L525.92 576.44 L530.50 575.06 L535.08 576.05 L539.65 575.86 L544.23 575.64 L548.80 575.07 L553.38 569.23 L557.95 575.05 L562.52 575.79 L567.10 575.73 L571.68 575.75 L576.25 576.64 L580.83 573.34 L585.40 576.35 L589.98 576.67 L594.55 575.26 L599.12 576.37 L603.70 575.84 L608.27 570.90 L612.85 575.69" fill="none" stroke="#c84a98" stroke-width="1.5" stroke-linejoin="round"/><path d="M67.35 580.68H612.85" stroke="#e8a33a" stroke-width="1.3"/><path d="M67.35 578.68H612.85" stroke="#1f78c1" stroke-width="1.5"/></g><text x="60.90" y="495.70" font-size="12.60" text-anchor="end" fill="#41474f" textLength="34.20" lengthAdjust="spacing" stroke="#41474f" stroke-width="0.20" >8.00%</text><text x="60.90" y="517.90" font-size="12.60" text-anchor="end" fill="#41474f" textLength="34.20" lengthAdjust="spacing" stroke="#41474f" stroke-width="0.20" >6.00%</text><text x="60.90" y="540.15" font-size="12.60" text-anchor="end" fill="#41474f" textLength="34.20" lengthAdjust="spacing" stroke="#41474f" stroke-width="0.20" >4.00%</text><text x="60.90" y="562.40" font-size="12.60" text-anchor="end" fill="#41474f" textLength="34.20" lengthAdjust="spacing" stroke="#41474f" stroke-width="0.20" >2.00%</text><text x="60.90" y="584.60" font-size="12.60" text-anchor="end" fill="#41474f" textLength="17.00" lengthAdjust="spacing" stroke="#41474f" stroke-width="0.20" >0%</text><text x="109.60" y="600.10" font-size="12.60" text-anchor="middle" fill="#41474f" textLength="31.60" lengthAdjust="spacing" stroke="#41474f" stroke-width="0.20" >12:40</text><text x="201.10" y="600.10" font-size="12.60" text-anchor="middle" fill="#41474f" textLength="31.60" lengthAdjust="spacing" stroke="#41474f" stroke-width="0.20" >12:50</text><text x="292.60" y="600.10" font-size="12.60" text-anchor="middle" fill="#41474f" textLength="31.60" lengthAdjust="spacing" stroke="#41474f" stroke-width="0.20" >13:00</text><text x="384.10" y="600.10" font-size="12.60" text-anchor="middle" fill="#41474f" textLength="31.60" lengthAdjust="spacing" stroke="#41474f" stroke-width="0.20" >13:10</text><text x="475.60" y="600.10" font-size="12.60" text-anchor="middle" fill="#41474f" textLength="31.60" lengthAdjust="spacing" stroke="#41474f" stroke-width="0.20" >13:20</text><text x="567.10" y="600.10" font-size="12.60" text-anchor="middle" fill="#41474f" textLength="31.60" lengthAdjust="spacing" stroke="#41474f" stroke-width="0.20" >13:30</text><clipPath id="lg15"><rect x="15.00" y="610" width="640" height="61.3"/></clipPath><g clip-path="url(#lg15)"><rect x="38.80" y="623.65" width="11.3" height="1.9" fill="#7EB26D"/><text x="57.70" y="627.55" font-size="12.60" text-anchor="start" fill="#41474f" textLength="270.40" lengthAdjust="spacing" stroke="#41474f" stroke-width="0.20" >ucloud-sh || blackbox_ucloud_sh_01 || fd_mosn</text><rect x="38.80" y="646.50" width="11.3" height="1.9" fill="#EAB839"/><text x="57.70" y="650.40" font-size="12.60" text-anchor="start" fill="#41474f" textLength="307.30" lengthAdjust="spacing" stroke="#41474f" stroke-width="0.20" >ucloud-sh || blackbox_ucloud_sh_01 || prometheus_fd</text><rect x="38.80" y="669.35" width="11.3" height="1.9" fill="#6ED0E0"/><text x="57.70" y="673.25" font-size="12.60" text-anchor="start" fill="#41474f" textLength="297.60" lengthAdjust="spacing" stroke="#41474f" stroke-width="0.20" >ucloud-sh || blackbox_ucloud_sh_01 || alertmanager</text></g></svg></section>
<section class="panel" style="left:652.00px;top:442.00px;width:629.00px;height:239.00px;overflow:hidden;"><svg class="ov" width="629.00" height="239.00" viewBox="652.00 442.00 629.00 239.00"><text x="911.56" y="463.90" font-size="15.08" fill="#3f454e" textLength="90.48" lengthAdjust="spacing" stroke="#3f454e" stroke-width="0.50">内存使用情况</text><path d="M732.00 492.30H1253.80M732.00 514.30H1253.80M732.00 536.35H1253.80M732.00 558.40H1253.80M732.00 580.40H1253.80M771.40 492.30V580.40M858.47 492.30V580.40M945.54 492.30V580.40M1032.61 492.30V580.40M1119.68 492.30V580.40M1206.75 492.30V580.40" stroke="#e7e8ea" stroke-width="1" fill="none"/><clipPath id="cp6962"><rect x="731.00" y="489.30" width="523.80" height="94.10"/></clipPath><g clip-path="url(#cp6962)"><linearGradient id="gmem" gradientUnits="userSpaceOnUse" x1="0" y1="498" x2="0" y2="580"><stop offset="0" stop-color="#cf4a5c" stop-opacity=".40"/><stop offset=".7" stop-color="#cf4a5c" stop-opacity=".10"/><stop offset="1" stop-color="#cf4a5c" stop-opacity=".04"/></linearGradient><rect x="732.00" y="498.8" width="518.50" height="81.60" fill="url(#gmem)"/><rect x="732.00" y="557.1" width="518.50" height="23.30" fill="#e7c9a0" opacity=".35"/><rect x="732.00" y="560.5" width="518.50" height="19.90" fill="#e6dccd" opacity=".55"/><linearGradient id="gmem2" gradientUnits="userSpaceOnUse" x1="0" y1="567" x2="0" y2="580.4"><stop offset="0" stop-color="#ecebe6"/><stop offset="1" stop-color="#fbfbfa"/></linearGradient><rect x="732.00" y="567.2" width="518.50" height="13.20" fill="url(#gmem2)"/><path d="M732.00 514.30H1250.50M732.00 536.30H1250.50M732.00 558.40H1250.50M771.40 498.80V580.40M858.47 498.80V580.40M945.54 498.80V580.40M1032.61 498.80V580.40M1119.68 498.80V580.40M1206.75 498.80V580.40" stroke="#7c5a68" stroke-opacity=".13" stroke-width="1" fill="none"/><path d="M732.00 498.80H1250.50" stroke="#cc5591" stroke-width="1.9"/><path d="M732.00 557.10H1250.50" stroke="#e0983e" stroke-width="1.9"/><path d="M732.00 560.70H1250.50" stroke="#4f95ae" stroke-width="1.9"/><path d="M732.00 566.00H1250.50" stroke="#5a8a3e" stroke-width="1.5"/><path d="M732.00 567.30H1250.50" stroke="#6d5c9f" stroke-width="1.4"/></g><text x="725.90" y="496.00" font-size="12.60" text-anchor="end" fill="#41474f" textLength="62.60" lengthAdjust="spacing" stroke="#41474f" stroke-width="0.20" >200.00 MB</text><text x="725.90" y="518.00" font-size="12.60" text-anchor="end" fill="#41474f" textLength="62.60" lengthAdjust="spacing" stroke="#41474f" stroke-width="0.20" >150.00 MB</text><text x="725.90" y="540.05" font-size="12.60" text-anchor="end" fill="#41474f" textLength="62.60" lengthAdjust="spacing" stroke="#41474f" stroke-width="0.20" >100.00 MB</text><text x="725.90" y="562.10" font-size="12.60" text-anchor="end" fill="#41474f" textLength="55.40" lengthAdjust="spacing" stroke="#41474f" stroke-width="0.20" >50.00 MB</text><text x="725.90" y="584.10" font-size="12.60" text-anchor="end" fill="#41474f" textLength="19.00" lengthAdjust="spacing" stroke="#41474f" stroke-width="0.20" >0 B</text><text x="771.40" y="600.10" font-size="12.60" text-anchor="middle" fill="#41474f" textLength="31.60" lengthAdjust="spacing" stroke="#41474f" stroke-width="0.20" >12:40</text><text x="858.47" y="600.10" font-size="12.60" text-anchor="middle" fill="#41474f" textLength="31.60" lengthAdjust="spacing" stroke="#41474f" stroke-width="0.20" >12:50</text><text x="945.54" y="600.10" font-size="12.60" text-anchor="middle" fill="#41474f" textLength="31.60" lengthAdjust="spacing" stroke="#41474f" stroke-width="0.20" >13:00</text><text x="1032.61" y="600.10" font-size="12.60" text-anchor="middle" fill="#41474f" textLength="31.60" lengthAdjust="spacing" stroke="#41474f" stroke-width="0.20" >13:10</text><text x="1119.68" y="600.10" font-size="12.60" text-anchor="middle" fill="#41474f" textLength="31.60" lengthAdjust="spacing" stroke="#41474f" stroke-width="0.20" >13:20</text><text x="1206.75" y="600.10" font-size="12.60" text-anchor="middle" fill="#41474f" textLength="31.60" lengthAdjust="spacing" stroke="#41474f" stroke-width="0.20" >13:30</text><clipPath id="lg652"><rect x="652.30" y="610" width="640" height="61.3"/></clipPath><g clip-path="url(#lg652)"><rect x="676.10" y="623.65" width="11.3" height="1.9" fill="#7EB26D"/><text x="695.00" y="627.55" font-size="12.60" text-anchor="start" fill="#41474f" textLength="270.40" lengthAdjust="spacing" stroke="#41474f" stroke-width="0.20" >ucloud-sh || blackbox_ucloud_sh_01 || fd_mosn</text><rect x="676.10" y="646.50" width="11.3" height="1.9" fill="#EAB839"/><text x="695.00" y="650.40" font-size="12.60" text-anchor="start" fill="#41474f" textLength="307.30" lengthAdjust="spacing" stroke="#41474f" stroke-width="0.20" >ucloud-sh || blackbox_ucloud_sh_01 || prometheus_fd</text><rect x="676.10" y="669.35" width="11.3" height="1.9" fill="#6ED0E0"/><text x="695.00" y="673.25" font-size="12.60" text-anchor="start" fill="#41474f" textLength="297.60" lengthAdjust="spacing" stroke="#41474f" stroke-width="0.20" >ucloud-sh || blackbox_ucloud_sh_01 || alertmanager</text></g></svg></section>
<section class="panel" style="left:1289.00px;top:442.00px;width:629.00px;height:239.00px;overflow:hidden;"><svg class="ov" width="629.00" height="239.00" viewBox="1289.00 442.00 629.00 239.00"><text x="1566.23" y="463.70" font-size="14.90" fill="#3f454e" textLength="23.38" lengthAdjust="spacing" stroke="#3f454e" stroke-width="0.50" xml:space="preserve" style="white-space:pre">GO</text><text x="1589.61" y="463.90" font-size="15.08" fill="#3f454e" textLength="30.16" lengthAdjust="spacing" stroke="#3f454e" stroke-width="0.50">协程</text><path d="M1327.80 492.20H1889.80M1327.80 514.30H1889.80M1327.80 536.40H1889.80M1327.80 558.50H1889.80M1327.80 580.60H1889.80M1370.50 492.20V580.60M1464.30 492.20V580.60M1558.10 492.20V580.60M1651.90 492.20V580.60M1745.70 492.20V580.60M1839.50 492.20V580.60" stroke="#e7e8ea" stroke-width="1" fill="none"/><clipPath id="cp13332"><rect x="1326.80" y="489.20" width="564.00" height="94.40"/></clipPath><g clip-path="url(#cp13332)"><linearGradient id="ggo" gradientUnits="userSpaceOnUse" x1="0" y1="515" x2="0" y2="580"><stop offset="0" stop-color="#cf5560" stop-opacity=".31"/><stop offset=".75" stop-color="#cf5560" stop-opacity=".09"/><stop offset="1" stop-color="#cf5560" stop-opacity=".04"/></linearGradient><path d="M1327.80 515.48 L1328.29 515.48 L1332.98 515.39 L1337.67 515.10 L1342.36 515.15 L1347.05 515.14 L1351.74 515.10 L1356.43 515.57 L1361.12 515.55 L1365.81 515.36 L1370.50 515.10 L1375.19 515.71 L1379.88 516.00 L1384.57 516.62 L1389.26 516.15 L1393.95 515.86 L1398.64 516.55 L1403.33 515.82 L1408.02 515.13 L1412.71 515.10 L1417.40 515.10 L1422.09 515.61 L1426.78 516.34 L1431.47 516.30 L1436.16 516.69 L1440.85 516.69 L1445.54 516.69 L1450.23 516.69 L1454.92 516.69 L1459.61 516.69 L1464.30 516.17 L1468.99 516.14 L1473.68 515.93 L1478.37 515.93 L1483.06 515.69 L1487.75 515.75 L1492.44 516.09 L1497.13 515.34 L1501.82 515.10 L1506.51 515.10 L1511.20 515.10 L1515.89 515.37 L1520.58 515.78 L1525.27 516.10 L1529.96 516.69 L1534.65 516.29 L1539.34 516.44 L1544.03 515.92 L1548.72 516.09 L1553.41 515.40 L1558.10 515.10 L1562.79 515.85 L1567.48 516.28 L1572.17 515.67 L1576.86 515.71 L1581.55 515.10 L1586.24 515.25 L1590.93 515.89 L1595.62 515.70 L1600.31 515.28 L1605.00 515.62 L1609.69 516.24 L1614.38 516.50 L1619.07 515.80 L1623.76 515.41 L1628.45 515.99 L1633.14 516.37 L1637.83 516.69 L1642.52 516.69 L1647.21 516.24 L1651.90 516.69 L1656.59 516.60 L1661.28 516.68 L1665.97 516.69 L1670.66 516.34 L1675.35 516.69 L1680.04 516.47 L1684.73 516.69 L1689.42 516.69 L1694.11 516.69 L1698.80 516.69 L1703.49 515.98 L1708.18 515.52 L1712.87 515.82 L1717.56 515.24 L1722.25 515.67 L1726.94 515.83 L1731.63 515.30 L1736.32 515.10 L1741.01 515.70 L1745.70 515.10 L1750.39 515.53 L1755.08 515.89 L1759.77 515.48 L1764.46 515.74 L1769.15 516.04 L1773.84 516.68 L1778.53 516.69 L1783.22 516.56 L1787.91 516.69 L1792.60 516.53 L1797.29 516.69 L1801.98 516.69 L1806.67 516.00 L1811.36 516.02 L1816.05 515.91 L1820.74 515.36 L1825.43 515.84 L1830.12 516.35 L1834.81 515.74 L1839.50 515.26 L1844.19 515.64 L1848.88 516.11 L1853.57 515.75 L1858.26 515.10 L1862.95 515.55 L1867.64 515.10 L1872.33 515.10 L1877.02 515.10 L1881.71 515.21 L1886.40 515.81 L1886.40 580.60 L1327.80 580.60 Z" fill="url(#ggo)"/><rect x="1327.80" y="563" width="558.60" height="17.60" fill="#e9e4f0" opacity=".55"/><rect x="1327.80" y="570.2" width="558.60" height="10.40" fill="#f0e6d6" opacity=".55"/><rect x="1327.80" y="574" width="558.60" height="6.60" fill="#f8f7f4"/><path d="M1327.80 536.40H1886.40M1327.80 558.50H1886.40M1370.50 516.00V580.60M1464.30 516.00V580.60M1558.10 516.00V580.60M1651.90 516.00V580.60M1745.70 516.00V580.60M1839.50 516.00V580.60" stroke="#7c5a68" stroke-opacity=".13" stroke-width="1" fill="none"/><path d="M1327.80 515.48 L1328.29 515.48 L1332.98 515.39 L1337.67 515.10 L1342.36 515.15 L1347.05 515.14 L1351.74 515.10 L1356.43 515.57 L1361.12 515.55 L1365.81 515.36 L1370.50 515.10 L1375.19 515.71 L1379.88 516.00 L1384.57 516.62 L1389.26 516.15 L1393.95 515.86 L1398.64 516.55 L1403.33 515.82 L1408.02 515.13 L1412.71 515.10 L1417.40 515.10 L1422.09 515.61 L1426.78 516.34 L1431.47 516.30 L1436.16 516.69 L1440.85 516.69 L1445.54 516.69 L1450.23 516.69 L1454.92 516.69 L1459.61 516.69 L1464.30 516.17 L1468.99 516.14 L1473.68 515.93 L1478.37 515.93 L1483.06 515.69 L1487.75 515.75 L1492.44 516.09 L1497.13 515.34 L1501.82 515.10 L1506.51 515.10 L1511.20 515.10 L1515.89 515.37 L1520.58 515.78 L1525.27 516.10 L1529.96 516.69 L1534.65 516.29 L1539.34 516.44 L1544.03 515.92 L1548.72 516.09 L1553.41 515.40 L1558.10 515.10 L1562.79 515.85 L1567.48 516.28 L1572.17 515.67 L1576.86 515.71 L1581.55 515.10 L1586.24 515.25 L1590.93 515.89 L1595.62 515.70 L1600.31 515.28 L1605.00 515.62 L1609.69 516.24 L1614.38 516.50 L1619.07 515.80 L1623.76 515.41 L1628.45 515.99 L1633.14 516.37 L1637.83 516.69 L1642.52 516.69 L1647.21 516.24 L1651.90 516.69 L1656.59 516.60 L1661.28 516.68 L1665.97 516.69 L1670.66 516.34 L1675.35 516.69 L1680.04 516.47 L1684.73 516.69 L1689.42 516.69 L1694.11 516.69 L1698.80 516.69 L1703.49 515.98 L1708.18 515.52 L1712.87 515.82 L1717.56 515.24 L1722.25 515.67 L1726.94 515.83 L1731.63 515.30 L1736.32 515.10 L1741.01 515.70 L1745.70 515.10 L1750.39 515.53 L1755.08 515.89 L1759.77 515.48 L1764.46 515.74 L1769.15 516.04 L1773.84 516.68 L1778.53 516.69 L1783.22 516.56 L1787.91 516.69 L1792.60 516.53 L1797.29 516.69 L1801.98 516.69 L1806.67 516.00 L1811.36 516.02 L1816.05 515.91 L1820.74 515.36 L1825.43 515.84 L1830.12 516.35 L1834.81 515.74 L1839.50 515.26 L1844.19 515.64 L1848.88 516.11 L1853.57 515.75 L1858.26 515.10 L1862.95 515.55 L1867.64 515.10 L1872.33 515.10 L1877.02 515.10 L1881.71 515.21 L1886.40 515.81" fill="none" stroke="#c94f9d" stroke-width="1.2" stroke-linejoin="round"/><path d="M1327.80 563.58 L1827.78 563.58 L1837.15 561.82 L1877.02 561.82 L1883.12 562.26 L1886.40 563.01" fill="none" stroke="#6d62ab" stroke-width="1.5"/><path d="M1327.80 567.16H1886.40" stroke="#3a8ab8" stroke-width="1.9"/><path d="M1327.80 570.61 L1555.76 570.61 L1562.79 569.46 L1569.83 569.46 L1576.86 570.61 L1886.40 570.61" fill="none" stroke="#e5963a" stroke-width="1.7"/><path d="M1327.80 573.70 L1328.29 573.70 L1332.98 573.70 L1337.67 573.70 L1342.36 573.70 L1347.05 573.70 L1351.74 573.70 L1356.43 573.70 L1361.12 573.70 L1365.81 573.70 L1370.50 573.70 L1375.19 573.70 L1379.88 573.70 L1384.57 573.70 L1389.26 572.42 L1393.95 574.41 L1398.64 574.41 L1403.33 574.41 L1408.02 574.41 L1412.71 574.41 L1417.40 574.41 L1422.09 574.41 L1426.78 574.41 L1431.47 573.70 L1436.16 573.70 L1440.85 573.70 L1445.54 573.70 L1450.23 573.70 L1454.92 573.70 L1459.61 573.70 L1464.30 574.41 L1468.99 574.41 L1473.68 574.41 L1478.37 574.41 L1483.06 574.41 L1487.75 574.41 L1492.44 574.41 L1497.13 574.41 L1501.82 574.41 L1506.51 574.41 L1511.20 574.41 L1515.89 574.41 L1520.58 574.41 L1525.27 574.41 L1529.96 574.41 L1534.65 574.41 L1539.34 574.41 L1544.03 573.70 L1548.72 572.42 L1553.41 574.41 L1558.10 574.41 L1562.79 574.41 L1567.48 574.41 L1572.17 572.64 L1576.86 573.70 L1581.55 573.70 L1586.24 573.70 L1590.93 573.70 L1595.62 573.70 L1600.31 573.70 L1605.00 573.70 L1609.69 573.70 L1614.38 573.70 L1619.07 574.41 L1623.76 574.41 L1628.45 574.41 L1633.14 574.41 L1637.83 574.41 L1642.52 572.42 L1647.21 574.41 L1651.90 574.41 L1656.59 574.41 L1661.28 574.41 L1665.97 574.41 L1670.66 574.41 L1675.35 574.41 L1680.04 574.41 L1684.73 574.41 L1689.42 574.41 L1694.11 574.41 L1698.80 574.41 L1703.49 574.41 L1708.18 574.41 L1712.87 574.41 L1717.56 574.41 L1722.25 573.70 L1726.94 572.64 L1731.63 574.41 L1736.32 574.41 L1741.01 574.41 L1745.70 574.41 L1750.39 574.41 L1755.08 574.41 L1759.77 574.41 L1764.46 574.41 L1769.15 574.41 L1773.84 574.41 L1778.53 574.41 L1783.22 574.41 L1787.91 574.41 L1792.60 573.70 L1797.29 573.70 L1801.98 573.70 L1806.67 573.70 L1811.36 573.70 L1816.05 573.70 L1820.74 573.70 L1825.43 573.70 L1830.12 573.70 L1834.81 573.70 L1839.50 573.70 L1844.19 573.70 L1848.88 573.70 L1853.57 573.70 L1858.26 573.70 L1862.95 573.17 L1867.64 573.70 L1872.33 573.70 L1877.02 573.70 L1881.71 573.70 L1886.40 573.70" fill="none" stroke="#5f9a4a" stroke-width="1.4" stroke-linejoin="round"/></g><text x="1321.20" y="495.90" font-size="12.60" text-anchor="end" fill="#41474f" textLength="21.60" lengthAdjust="spacing" stroke="#41474f" stroke-width="0.20" >200</text><text x="1321.20" y="518.00" font-size="12.60" text-anchor="end" fill="#41474f" textLength="21.60" lengthAdjust="spacing" stroke="#41474f" stroke-width="0.20" >150</text><text x="1321.20" y="540.10" font-size="12.60" text-anchor="end" fill="#41474f" textLength="21.60" lengthAdjust="spacing" stroke="#41474f" stroke-width="0.20" >100</text><text x="1321.20" y="562.20" font-size="12.60" text-anchor="end" fill="#41474f" textLength="14.40" lengthAdjust="spacing" stroke="#41474f" stroke-width="0.20" >50</text><text x="1321.20" y="584.30" font-size="12.60" text-anchor="end" fill="#41474f" textLength="7.20" lengthAdjust="spacing" stroke="#41474f" stroke-width="0.20" >0</text><text x="1370.50" y="600.10" font-size="12.60" text-anchor="middle" fill="#41474f" textLength="31.60" lengthAdjust="spacing" stroke="#41474f" stroke-width="0.20" >12:40</text><text x="1464.30" y="600.10" font-size="12.60" text-anchor="middle" fill="#41474f" textLength="31.60" lengthAdjust="spacing" stroke="#41474f" stroke-width="0.20" >12:50</text><text x="1558.10" y="600.10" font-size="12.60" text-anchor="middle" fill="#41474f" textLength="31.60" lengthAdjust="spacing" stroke="#41474f" stroke-width="0.20" >13:00</text><text x="1651.90" y="600.10" font-size="12.60" text-anchor="middle" fill="#41474f" textLength="31.60" lengthAdjust="spacing" stroke="#41474f" stroke-width="0.20" >13:10</text><text x="1745.70" y="600.10" font-size="12.60" text-anchor="middle" fill="#41474f" textLength="31.60" lengthAdjust="spacing" stroke="#41474f" stroke-width="0.20" >13:20</text><text x="1839.50" y="600.10" font-size="12.60" text-anchor="middle" fill="#41474f" textLength="31.60" lengthAdjust="spacing" stroke="#41474f" stroke-width="0.20" >13:30</text><clipPath id="lg1288"><rect x="1288.70" y="610" width="640" height="61.3"/></clipPath><g clip-path="url(#lg1288)"><rect x="1312.50" y="623.65" width="11.3" height="1.9" fill="#7EB26D"/><text x="1331.40" y="627.55" font-size="12.60" text-anchor="start" fill="#41474f" textLength="270.40" lengthAdjust="spacing" stroke="#41474f" stroke-width="0.20" >ucloud-sh || blackbox_ucloud_sh_01 || fd_mosn</text><rect x="1312.50" y="646.50" width="11.3" height="1.9" fill="#EAB839"/><text x="1331.40" y="650.40" font-size="12.60" text-anchor="start" fill="#41474f" textLength="307.30" lengthAdjust="spacing" stroke="#41474f" stroke-width="0.20" >ucloud-sh || blackbox_ucloud_sh_01 || prometheus_fd</text><rect x="1312.50" y="669.35" width="11.3" height="1.9" fill="#6ED0E0"/><text x="1331.40" y="673.25" font-size="12.60" text-anchor="start" fill="#41474f" textLength="297.60" lengthAdjust="spacing" stroke="#41474f" stroke-width="0.20" >ucloud-sh || blackbox_ucloud_sh_01 || alertmanager</text></g></svg></section>
<section class="panel" style="left:15.00px;top:690.00px;width:629.00px;height:240.00px;overflow:hidden;"><svg class="ov" width="629.00" height="240.00" viewBox="15.00 690.00 629.00 240.00"><text x="289.54" y="711.90" font-size="15.08" fill="#3f454e" textLength="60.32" lengthAdjust="spacing" stroke="#3f454e" stroke-width="0.50">网络流量</text><path d="M107.80 740.20H616.70M107.80 769.00H616.70M107.80 797.85H616.70M107.80 826.70H616.70M107.80 855.50H616.70M146.40 740.20V855.50M231.20 740.20V855.50M316.00 740.20V855.50M400.80 740.20V855.50M485.60 740.20V855.50M570.40 740.20V855.50" stroke="#e7e8ea" stroke-width="1" fill="none"/><clipPath id="cp840"><rect x="106.80" y="737.20" width="510.90" height="121.30"/></clipPath><g clip-path="url(#cp840)"><linearGradient id="gnet" gradientUnits="userSpaceOnUse" x1="0" y1="755" x2="0" y2="827"><stop offset="0" stop-color="#b9b04f" stop-opacity=".30"/><stop offset="1" stop-color="#b9b04f" stop-opacity=".12"/></linearGradient><path d="M107.80 800.66 L112.48 789.13 L120.96 758.86 L129.44 826.60 L137.92 826.60 L146.40 806.42 L154.88 794.89 L163.36 758.86 L171.84 826.60 L180.32 826.60 L188.80 800.66 L197.28 795.61 L205.76 758.86 L214.24 826.60 L222.72 826.60 L231.20 809.31 L239.68 792.01 L248.16 758.14 L256.64 826.60 L265.12 826.60 L273.60 809.31 L282.08 794.89 L290.56 763.91 L299.04 826.60 L307.52 826.60 L316.00 809.31 L324.48 794.89 L332.96 758.86 L341.44 826.60 L349.92 826.60 L358.40 808.58 L366.88 794.89 L375.36 759.58 L383.84 826.60 L392.32 826.60 L400.80 809.31 L409.28 794.89 L417.76 758.86 L426.24 826.60 L434.72 826.60 L443.20 803.54 L451.68 795.61 L460.16 758.86 L468.64 826.60 L477.12 826.60 L485.60 806.42 L494.08 787.69 L502.56 758.86 L511.04 826.60 L519.52 826.60 L528.00 803.54 L536.48 795.61 L544.96 758.86 L553.44 826.60 L561.92 826.60 L570.40 809.31 L578.88 794.89 L587.36 758.86 L595.84 826.60 L604.32 826.60 L613.00 808.58 L613.00 826.60 L107.80 826.60 Z" fill="url(#gnet)"/><path d="M107.80 800.66 L112.48 789.13 L120.96 758.86 L129.44 826.60 L137.92 826.60 L146.40 806.42 L154.88 794.89 L163.36 758.86 L171.84 826.60 L180.32 826.60 L188.80 800.66 L197.28 795.61 L205.76 758.86 L214.24 826.60 L222.72 826.60 L231.20 809.31 L239.68 792.01 L248.16 758.14 L256.64 826.60 L265.12 826.60 L273.60 809.31 L282.08 794.89 L290.56 763.91 L299.04 826.60 L307.52 826.60 L316.00 809.31 L324.48 794.89 L332.96 758.86 L341.44 826.60 L349.92 826.60 L358.40 808.58 L366.88 794.89 L375.36 759.58 L383.84 826.60 L392.32 826.60 L400.80 809.31 L409.28 794.89 L417.76 758.86 L426.24 826.60 L434.72 826.60 L443.20 803.54 L451.68 795.61 L460.16 758.86 L468.64 826.60 L477.12 826.60 L485.60 806.42 L494.08 787.69 L502.56 758.86 L511.04 826.60 L519.52 826.60 L528.00 803.54 L536.48 795.61 L544.96 758.86 L553.44 826.60 L561.92 826.60 L570.40 809.31 L578.88 794.89 L587.36 758.86 L595.84 826.60 L604.32 826.60 L613.00 808.58" fill="none" stroke="#e9b13b" stroke-width="2.1" stroke-linejoin="round"/><path d="M116.96 827.00 L120.96 827.90 L124.96 827.00M159.36 827.00 L163.36 827.90 L167.36 827.00M201.76 827.00 L205.76 827.90 L209.76 827.00M244.16 827.00 L248.16 827.90 L252.16 827.00M286.56 827.00 L290.56 827.90 L294.56 827.00M328.96 827.00 L332.96 827.90 L336.96 827.00M371.36 827.00 L375.36 827.90 L379.36 827.00M413.76 827.00 L417.76 827.90 L421.76 827.00M456.16 827.00 L460.16 827.90 L464.16 827.00M498.56 827.00 L502.56 827.90 L506.56 827.00M540.96 827.00 L544.96 827.90 L548.96 827.00M583.36 827.00 L587.36 827.90 L591.36 827.00" fill="none" stroke="#2a7fc4" stroke-width="1.2"/><path d="M107.80 826.50H613" stroke="#7a5a9e" stroke-width="2.5"/><path d="M107.80 825.00H613" stroke="#b75c86" stroke-width=".8"/></g><text x="101.40" y="743.90" font-size="12.60" text-anchor="end" fill="#41474f" textLength="50.00" lengthAdjust="spacing" stroke="#41474f" stroke-width="0.20" >60 Mbps</text><text x="101.40" y="772.70" font-size="12.60" text-anchor="end" fill="#41474f" textLength="50.00" lengthAdjust="spacing" stroke="#41474f" stroke-width="0.20" >40 Mbps</text><text x="101.40" y="801.55" font-size="12.60" text-anchor="end" fill="#41474f" textLength="50.00" lengthAdjust="spacing" stroke="#41474f" stroke-width="0.20" >20 Mbps</text><text x="101.40" y="830.40" font-size="12.60" text-anchor="end" fill="#41474f" textLength="31.40" lengthAdjust="spacing" stroke="#41474f" stroke-width="0.20" >0 bps</text><text x="101.40" y="859.20" font-size="12.60" text-anchor="end" fill="#41474f" textLength="54.40" lengthAdjust="spacing" stroke="#41474f" stroke-width="0.20" >-20 Mbps</text><text x="146.40" y="874.70" font-size="12.60" text-anchor="middle" fill="#41474f" textLength="31.60" lengthAdjust="spacing" stroke="#41474f" stroke-width="0.20" >12:40</text><text x="231.20" y="874.70" font-size="12.60" text-anchor="middle" fill="#41474f" textLength="31.60" lengthAdjust="spacing" stroke="#41474f" stroke-width="0.20" >12:50</text><text x="316.00" y="874.70" font-size="12.60" text-anchor="middle" fill="#41474f" textLength="31.60" lengthAdjust="spacing" stroke="#41474f" stroke-width="0.20" >13:00</text><text x="400.80" y="874.70" font-size="12.60" text-anchor="middle" fill="#41474f" textLength="31.60" lengthAdjust="spacing" stroke="#41474f" stroke-width="0.20" >13:10</text><text x="485.60" y="874.70" font-size="12.60" text-anchor="middle" fill="#41474f" textLength="31.60" lengthAdjust="spacing" stroke="#41474f" stroke-width="0.20" >13:20</text><text x="570.40" y="874.70" font-size="12.60" text-anchor="middle" fill="#41474f" textLength="31.60" lengthAdjust="spacing" stroke="#41474f" stroke-width="0.20" >13:30</text><g transform="translate(33.20,807.30) rotate(-90)"><text x="-59.31" y="4.40" font-size="12.90" text-anchor="start" fill="#41474f" textLength="25.80" lengthAdjust="spacing">上传</text><text x="-33.51" y="4.40" font-size="12.90" text-anchor="start" fill="#41474f">（</text><text x="-20.61" y="4.40" font-size="12.90" text-anchor="start" fill="#41474f" stroke="#41474f" stroke-width="0.20" >-</text><text x="-16.31" y="4.40" font-size="12.90" text-anchor="start" fill="#41474f">）</text><text x="-3.41" y="4.40" font-size="12.90" text-anchor="start" fill="#41474f" stroke="#41474f" stroke-width="0.20" >/</text><text x="0.17" y="4.40" font-size="12.90" text-anchor="start" fill="#41474f" textLength="25.80" lengthAdjust="spacing">下载</text><text x="25.97" y="4.40" font-size="12.90" text-anchor="start" fill="#41474f">（</text><text x="38.87" y="4.40" font-size="12.90" text-anchor="start" fill="#41474f" stroke="#41474f" stroke-width="0.20" >+</text><text x="46.41" y="4.40" font-size="12.90" text-anchor="start" fill="#41474f">）</text></g></svg></section>
<section class="panel" style="left:652.00px;top:690.00px;width:629.00px;height:240.00px;overflow:hidden;"><svg class="ov" width="629.00" height="240.00" viewBox="652.00 690.00 629.00 240.00"><text x="919.20" y="711.90" font-size="15.08" fill="#3f454e" textLength="75.40" lengthAdjust="spacing" stroke="#3f454e" stroke-width="0.50">网络流量包</text><path d="M744.10 740.20H1254.00M744.10 769.00H1254.00M744.10 797.85H1254.00M744.10 826.70H1254.00M744.10 855.50H1254.00M782.70 740.20V855.50M867.70 740.20V855.50M952.70 740.20V855.50M1037.70 740.20V855.50M1122.70 740.20V855.50M1207.70 740.20V855.50" stroke="#e7e8ea" stroke-width="1" fill="none"/><clipPath id="cp7210"><rect x="743.10" y="737.20" width="511.90" height="121.30"/></clipPath><g clip-path="url(#cp7210)"><path d="M744.10 785.74 L748.70 788.63 L757.20 752.88 L765.70 797.85 L774.20 797.85 L782.70 781.71 L791.20 772.48 L799.70 754.04 L808.20 797.85 L816.70 797.85 L825.20 778.25 L833.70 773.64 L842.20 752.88 L850.70 797.85 L859.20 797.85 L867.70 782.86 L876.20 767.87 L884.70 752.88 L893.20 797.85 L901.70 797.85 L910.20 784.59 L918.70 772.48 L927.20 756.92 L935.70 797.85 L944.20 797.85 L952.70 784.01 L961.20 771.33 L969.70 752.88 L978.20 797.85 L986.70 797.85 L995.20 783.44 L1003.70 771.33 L1012.20 752.88 L1020.70 797.85 L1029.20 797.85 L1037.70 784.01 L1046.20 771.33 L1054.70 752.88 L1063.20 797.85 L1071.70 797.85 L1080.20 779.40 L1088.70 773.64 L1097.20 753.46 L1105.70 797.85 L1114.20 797.85 L1122.70 780.56 L1131.20 767.87 L1139.70 754.04 L1148.20 797.85 L1156.70 797.85 L1165.20 779.40 L1173.70 773.64 L1182.20 754.04 L1190.70 797.85 L1199.20 797.85 L1207.70 784.01 L1216.20 773.64 L1224.70 753.46 L1233.20 797.85 L1241.70 797.85 L1250.60 788.63 L1250.60 797.85 L744.10 797.85 Z" fill="#b9b04f" fill-opacity=".26"/><path d="M744.10 805.34 L748.70 804.77 L757.20 822.13 L765.70 797.85 L774.20 797.85 L782.70 806.73 L791.20 811.80 L799.70 821.51 L808.20 797.85 L816.70 797.85 L825.20 808.63 L833.70 811.17 L842.20 822.13 L850.70 797.85 L859.20 797.85 L867.70 806.09 L876.20 814.34 L884.70 822.13 L893.20 797.85 L901.70 797.85 L910.20 805.14 L918.70 811.80 L927.20 819.95 L935.70 797.85 L944.20 797.85 L952.70 805.46 L961.20 812.44 L969.70 822.13 L978.20 797.85 L986.70 797.85 L995.20 805.78 L1003.70 812.44 L1012.20 822.13 L1020.70 797.85 L1029.20 797.85 L1037.70 805.46 L1046.20 812.44 L1054.70 822.13 L1063.20 797.85 L1071.70 797.85 L1080.20 808.00 L1088.70 811.17 L1097.20 821.82 L1105.70 797.85 L1114.20 797.85 L1122.70 807.36 L1131.20 814.34 L1139.70 821.51 L1148.20 797.85 L1156.70 797.85 L1165.20 808.00 L1173.70 811.17 L1182.20 821.51 L1190.70 797.85 L1199.20 797.85 L1207.70 805.46 L1216.20 811.17 L1224.70 821.82 L1233.20 797.85 L1241.70 797.85 L1250.60 803.62 L1250.60 797.85 L744.10 797.85 Z" fill="#7b6a9c" fill-opacity=".17"/><path d="M744.10 785.74 L748.70 788.63 L757.20 752.88 L765.70 797.85 L774.20 797.85 L782.70 781.71 L791.20 772.48 L799.70 754.04 L808.20 797.85 L816.70 797.85 L825.20 778.25 L833.70 773.64 L842.20 752.88 L850.70 797.85 L859.20 797.85 L867.70 782.86 L876.20 767.87 L884.70 752.88 L893.20 797.85 L901.70 797.85 L910.20 784.59 L918.70 772.48 L927.20 756.92 L935.70 797.85 L944.20 797.85 L952.70 784.01 L961.20 771.33 L969.70 752.88 L978.20 797.85 L986.70 797.85 L995.20 783.44 L1003.70 771.33 L1012.20 752.88 L1020.70 797.85 L1029.20 797.85 L1037.70 784.01 L1046.20 771.33 L1054.70 752.88 L1063.20 797.85 L1071.70 797.85 L1080.20 779.40 L1088.70 773.64 L1097.20 753.46 L1105.70 797.85 L1114.20 797.85 L1122.70 780.56 L1131.20 767.87 L1139.70 754.04 L1148.20 797.85 L1156.70 797.85 L1165.20 779.40 L1173.70 773.64 L1182.20 754.04 L1190.70 797.85 L1199.20 797.85 L1207.70 784.01 L1216.20 773.64 L1224.70 753.46 L1233.20 797.85 L1241.70 797.85 L1250.60 788.63" fill="none" stroke="#e9b13b" stroke-width="2.1" stroke-linejoin="round"/><path d="M744.10 805.34 L748.70 804.77 L757.20 822.13 L765.70 797.85 L774.20 797.85 L782.70 806.73 L791.20 811.80 L799.70 821.51 L808.20 797.85 L816.70 797.85 L825.20 808.63 L833.70 811.17 L842.20 822.13 L850.70 797.85 L859.20 797.85 L867.70 806.09 L876.20 814.34 L884.70 822.13 L893.20 797.85 L901.70 797.85 L910.20 805.14 L918.70 811.80 L927.20 819.95 L935.70 797.85 L944.20 797.85 L952.70 805.46 L961.20 812.44 L969.70 822.13 L978.20 797.85 L986.70 797.85 L995.20 805.78 L1003.70 812.44 L1012.20 822.13 L1020.70 797.85 L1029.20 797.85 L1037.70 805.46 L1046.20 812.44 L1054.70 822.13 L1063.20 797.85 L1071.70 797.85 L1080.20 808.00 L1088.70 811.17 L1097.20 821.82 L1105.70 797.85 L1114.20 797.85 L1122.70 807.36 L1131.20 814.34 L1139.70 821.51 L1148.20 797.85 L1156.70 797.85 L1165.20 808.00 L1173.70 811.17 L1182.20 821.51 L1190.70 797.85 L1199.20 797.85 L1207.70 805.46 L1216.20 811.17 L1224.70 821.82 L1233.20 797.85 L1241.70 797.85 L1250.60 803.62" fill="none" stroke="#1f78c1" stroke-width="2.1" stroke-linejoin="round"/><path d="M744.10 797.60H1250.6" stroke="#7a5a9e" stroke-width="2.0"/></g><text x="737.30" y="743.90" font-size="12.60" text-anchor="end" fill="#41474f" textLength="48.80" lengthAdjust="spacing" stroke="#41474f" stroke-width="0.20" >5.0 kpps</text><text x="737.30" y="772.70" font-size="12.60" text-anchor="end" fill="#41474f" textLength="48.80" lengthAdjust="spacing" stroke="#41474f" stroke-width="0.20" >2.5 kpps</text><text x="737.30" y="801.55" font-size="12.60" text-anchor="end" fill="#41474f" textLength="31.60" lengthAdjust="spacing" stroke="#41474f" stroke-width="0.20" >0 pps</text><text x="737.30" y="830.40" font-size="12.60" text-anchor="end" fill="#41474f" textLength="53.20" lengthAdjust="spacing" stroke="#41474f" stroke-width="0.20" >-2.5 kpps</text><text x="737.30" y="859.20" font-size="12.60" text-anchor="end" fill="#41474f" textLength="53.20" lengthAdjust="spacing" stroke="#41474f" stroke-width="0.20" >-5.0 kpps</text><text x="782.70" y="874.70" font-size="12.60" text-anchor="middle" fill="#41474f" textLength="31.60" lengthAdjust="spacing" stroke="#41474f" stroke-width="0.20" >12:40</text><text x="867.70" y="874.70" font-size="12.60" text-anchor="middle" fill="#41474f" textLength="31.60" lengthAdjust="spacing" stroke="#41474f" stroke-width="0.20" >12:50</text><text x="952.70" y="874.70" font-size="12.60" text-anchor="middle" fill="#41474f" textLength="31.60" lengthAdjust="spacing" stroke="#41474f" stroke-width="0.20" >13:00</text><text x="1037.70" y="874.70" font-size="12.60" text-anchor="middle" fill="#41474f" textLength="31.60" lengthAdjust="spacing" stroke="#41474f" stroke-width="0.20" >13:10</text><text x="1122.70" y="874.70" font-size="12.60" text-anchor="middle" fill="#41474f" textLength="31.60" lengthAdjust="spacing" stroke="#41474f" stroke-width="0.20" >13:20</text><text x="1207.70" y="874.70" font-size="12.60" text-anchor="middle" fill="#41474f" textLength="31.60" lengthAdjust="spacing" stroke="#41474f" stroke-width="0.20" >13:30</text><g transform="translate(671.00,807.30) rotate(-90)"><text x="-59.31" y="4.40" font-size="12.90" text-anchor="start" fill="#41474f" textLength="25.80" lengthAdjust="spacing">上传</text><text x="-33.51" y="4.40" font-size="12.90" text-anchor="start" fill="#41474f">（</text><text x="-20.61" y="4.40" font-size="12.90" text-anchor="start" fill="#41474f" stroke="#41474f" stroke-width="0.20" >-</text><text x="-16.31" y="4.40" font-size="12.90" text-anchor="start" fill="#41474f">）</text><text x="-3.41" y="4.40" font-size="12.90" text-anchor="start" fill="#41474f" stroke="#41474f" stroke-width="0.20" >/</text><text x="0.17" y="4.40" font-size="12.90" text-anchor="start" fill="#41474f" textLength="25.80" lengthAdjust="spacing">下载</text><text x="25.97" y="4.40" font-size="12.90" text-anchor="start" fill="#41474f">（</text><text x="38.87" y="4.40" font-size="12.90" text-anchor="start" fill="#41474f" stroke="#41474f" stroke-width="0.20" >+</text><text x="46.41" y="4.40" font-size="12.90" text-anchor="start" fill="#41474f">）</text></g></svg></section>
<section class="panel" style="left:1289.00px;top:690.00px;width:629.00px;height:240.00px;overflow:hidden;"><svg class="ov" width="629.00" height="240.00" viewBox="1289.00 690.00 629.00 240.00"><path d="M1289.40 690.40 H1320.80 L1289.40 721.40 Z" fill="#dadfe7"/><g fill="#555a63"><circle cx="1298.70" cy="695.90" r="1.35"/><path d="M1296.20 699.10h3.9v4.3h1.1v1.6h-5.2v-1.6h1.3v-2.7h-1.1z"/></g><text x="1546.00" y="711.70" font-size="14.90" fill="#3f454e" textLength="34.07" lengthAdjust="spacing" stroke="#3f454e" stroke-width="0.50" xml:space="preserve" style="white-space:pre">TCP </text><text x="1580.08" y="711.90" font-size="15.08" fill="#3f454e" textLength="60.32" lengthAdjust="spacing" stroke="#3f454e" stroke-width="0.50">连接情况</text><path d="M1320.00 740.50H1890.30M1320.00 769.20H1890.30M1320.00 797.95H1890.30M1320.00 826.70H1890.30M1320.00 855.40H1890.30M1364.40 740.50V855.40M1459.20 740.50V855.40M1554.00 740.50V855.40M1648.80 740.50V855.40M1743.60 740.50V855.40M1838.40 740.50V855.40" stroke="#e7e8ea" stroke-width="1" fill="none"/><clipPath id="cp13580"><rect x="1319.00" y="737.50" width="572.30" height="120.90"/></clipPath><g clip-path="url(#cp13580)"><linearGradient id="gt1" gradientUnits="userSpaceOnUse" x1="0" y1="745" x2="0" y2="855"><stop offset="0" stop-color="#6f5a96" stop-opacity=".30"/><stop offset=".5" stop-color="#6f5a96" stop-opacity=".17"/><stop offset="1" stop-color="#6f5a96" stop-opacity=".0"/></linearGradient><linearGradient id="gt2" gradientUnits="userSpaceOnUse" x1="0" y1="790" x2="0" y2="855"><stop offset="0" stop-color="#cdbd84" stop-opacity=".34"/><stop offset=".55" stop-color="#d9cfae" stop-opacity=".26"/><stop offset="1" stop-color="#e9e2c8" stop-opacity=".0"/></linearGradient><path d="M1320.00 757.02 L1325.92 757.02 L1335.40 748.40 L1344.88 757.02 L1354.36 757.02 L1363.84 757.02 L1373.32 757.02 L1382.80 754.14 L1392.28 762.76 L1401.76 762.76 L1411.24 762.76 L1420.72 762.76 L1430.20 754.14 L1439.68 757.02 L1449.16 757.02 L1458.64 757.02 L1468.12 757.02 L1477.60 748.40 L1487.08 762.76 L1496.56 762.76 L1506.04 762.76 L1515.52 762.76 L1525.00 754.14 L1534.48 762.76 L1543.96 762.76 L1553.44 762.76 L1562.92 759.89 L1572.40 748.40 L1581.88 757.02 L1591.36 757.02 L1600.84 757.02 L1610.32 757.02 L1619.80 754.14 L1629.28 762.76 L1638.76 762.76 L1648.24 762.76 L1657.72 762.76 L1667.20 754.14 L1676.68 762.76 L1686.16 762.76 L1695.64 762.76 L1705.12 762.76 L1714.60 754.14 L1724.08 762.76 L1733.56 762.76 L1743.04 762.76 L1752.52 762.76 L1762.00 759.89 L1771.48 762.76 L1780.96 762.76 L1790.44 757.02 L1799.92 757.02 L1809.40 754.14 L1818.88 757.02 L1828.36 757.02 L1837.84 751.27 L1847.32 751.27 L1856.80 742.65 L1866.28 751.27 L1875.76 751.27 L1885.24 757.02 L1885.24 855.40 L1320.00 855.40 Z" fill="url(#gt1)"/><path d="M1320.00 800.82 L1325.92 800.82 L1335.40 792.21 L1344.88 800.82 L1354.36 800.82 L1363.84 800.82 L1373.32 800.82 L1382.80 797.95 L1392.28 806.57 L1401.76 806.57 L1411.24 806.57 L1420.72 806.57 L1430.20 797.95 L1439.68 800.82 L1449.16 800.82 L1458.64 800.82 L1468.12 800.82 L1477.60 792.21 L1487.08 806.57 L1496.56 806.57 L1506.04 806.57 L1515.52 806.57 L1525.00 797.95 L1534.48 806.57 L1543.96 806.57 L1553.44 806.57 L1562.92 803.69 L1572.40 792.21 L1581.88 800.82 L1591.36 800.82 L1600.84 800.82 L1610.32 800.82 L1619.80 797.95 L1629.28 806.57 L1638.76 806.57 L1648.24 806.57 L1657.72 806.57 L1667.20 797.95 L1676.68 806.57 L1686.16 806.57 L1695.64 806.57 L1705.12 806.57 L1714.60 797.95 L1724.08 806.57 L1733.56 806.57 L1743.04 806.57 L1752.52 806.57 L1762.00 803.69 L1771.48 806.57 L1780.96 806.57 L1790.44 800.82 L1799.92 800.82 L1809.40 797.95 L1818.88 800.82 L1828.36 800.82 L1837.84 795.08 L1847.32 795.08 L1856.80 786.46 L1866.28 795.08 L1875.76 795.08 L1885.24 800.82 L1885.24 855.40 L1320.00 855.40 Z" fill="url(#gt2)"/><clipPath id="ctcp"><path d="M1320.00 757.02 L1325.92 757.02 L1335.40 748.40 L1344.88 757.02 L1354.36 757.02 L1363.84 757.02 L1373.32 757.02 L1382.80 754.14 L1392.28 762.76 L1401.76 762.76 L1411.24 762.76 L1420.72 762.76 L1430.20 754.14 L1439.68 757.02 L1449.16 757.02 L1458.64 757.02 L1468.12 757.02 L1477.60 748.40 L1487.08 762.76 L1496.56 762.76 L1506.04 762.76 L1515.52 762.76 L1525.00 754.14 L1534.48 762.76 L1543.96 762.76 L1553.44 762.76 L1562.92 759.89 L1572.40 748.40 L1581.88 757.02 L1591.36 757.02 L1600.84 757.02 L1610.32 757.02 L1619.80 754.14 L1629.28 762.76 L1638.76 762.76 L1648.24 762.76 L1657.72 762.76 L1667.20 754.14 L1676.68 762.76 L1686.16 762.76 L1695.64 762.76 L1705.12 762.76 L1714.60 754.14 L1724.08 762.76 L1733.56 762.76 L1743.04 762.76 L1752.52 762.76 L1762.00 759.89 L1771.48 762.76 L1780.96 762.76 L1790.44 757.02 L1799.92 757.02 L1809.40 754.14 L1818.88 757.02 L1828.36 757.02 L1837.84 751.27 L1847.32 751.27 L1856.80 742.65 L1866.28 751.27 L1875.76 751.27 L1885.24 757.02 L1885.24 855.40 L1320.00 855.40 Z"/></clipPath><path d="M1320.00 769.20H1886.00M1320.00 797.95H1886.00M1320.00 826.70H1886.00M1364.40 740.50V855.40M1459.20 740.50V855.40M1554.00 740.50V855.40M1648.80 740.50V855.40M1743.60 740.50V855.40M1838.40 740.50V855.40" stroke="#6c5f7a" stroke-opacity=".11" stroke-width="1" fill="none" clip-path="url(#ctcp)"/><path d="M1320.00 757.02 L1325.92 757.02 L1335.40 748.40 L1344.88 757.02 L1354.36 757.02 L1363.84 757.02 L1373.32 757.02 L1382.80 754.14 L1392.28 762.76 L1401.76 762.76 L1411.24 762.76 L1420.72 762.76 L1430.20 754.14 L1439.68 757.02 L1449.16 757.02 L1458.64 757.02 L1468.12 757.02 L1477.60 748.40 L1487.08 762.76 L1496.56 762.76 L1506.04 762.76 L1515.52 762.76 L1525.00 754.14 L1534.48 762.76 L1543.96 762.76 L1553.44 762.76 L1562.92 759.89 L1572.40 748.40 L1581.88 757.02 L1591.36 757.02 L1600.84 757.02 L1610.32 757.02 L1619.80 754.14 L1629.28 762.76 L1638.76 762.76 L1648.24 762.76 L1657.72 762.76 L1667.20 754.14 L1676.68 762.76 L1686.16 762.76 L1695.64 762.76 L1705.12 762.76 L1714.60 754.14 L1724.08 762.76 L1733.56 762.76 L1743.04 762.76 L1752.52 762.76 L1762.00 759.89 L1771.48 762.76 L1780.96 762.76 L1790.44 757.02 L1799.92 757.02 L1809.40 754.14 L1818.88 757.02 L1828.36 757.02 L1837.84 751.27 L1847.32 751.27 L1856.80 742.65 L1866.28 751.27 L1875.76 751.27 L1885.24 757.02" fill="none" stroke="#1f78c1" stroke-width="2.3" stroke-linejoin="round"/><path d="M1320.00 800.82 L1325.92 800.82 L1335.40 792.21 L1344.88 800.82 L1354.36 800.82 L1363.84 800.82 L1373.32 800.82 L1382.80 797.95 L1392.28 806.57 L1401.76 806.57 L1411.24 806.57 L1420.72 806.57 L1430.20 797.95 L1439.68 800.82 L1449.16 800.82 L1458.64 800.82 L1468.12 800.82 L1477.60 792.21 L1487.08 806.57 L1496.56 806.57 L1506.04 806.57 L1515.52 806.57 L1525.00 797.95 L1534.48 806.57 L1543.96 806.57 L1553.44 806.57 L1562.92 803.69 L1572.40 792.21 L1581.88 800.82 L1591.36 800.82 L1600.84 800.82 L1610.32 800.82 L1619.80 797.95 L1629.28 806.57 L1638.76 806.57 L1648.24 806.57 L1657.72 806.57 L1667.20 797.95 L1676.68 806.57 L1686.16 806.57 L1695.64 806.57 L1705.12 806.57 L1714.60 797.95 L1724.08 806.57 L1733.56 806.57 L1743.04 806.57 L1752.52 806.57 L1762.00 803.69 L1771.48 806.57 L1780.96 806.57 L1790.44 800.82 L1799.92 800.82 L1809.40 797.95 L1818.88 800.82 L1828.36 800.82 L1837.84 795.08 L1847.32 795.08 L1856.80 786.46 L1866.28 795.08 L1875.76 795.08 L1885.24 800.82" fill="none" stroke="#dfae45" stroke-width="2.3" stroke-linejoin="round"/><path d="M1320.00 819.49 L1325.92 821.50 L1335.40 815.18 L1344.88 820.93 L1354.36 823.80 L1363.84 818.06 L1373.32 818.06 L1382.80 815.18 L1392.28 820.93 L1401.76 823.80 L1411.24 820.93 L1420.72 820.93 L1430.20 818.06 L1439.68 820.93 L1449.16 823.80 L1458.64 818.06 L1468.12 826.67 L1477.60 818.06 L1487.08 818.06 L1496.56 823.80 L1506.04 818.06 L1515.52 820.93 L1525.00 818.06 L1534.48 820.93 L1543.96 823.80 L1553.44 815.18 L1562.92 823.80 L1572.40 815.18 L1581.88 820.93 L1591.36 823.80 L1600.84 818.06 L1610.32 820.93 L1619.80 812.31 L1629.28 823.80 L1638.76 826.67 L1648.24 820.93 L1657.72 823.80 L1667.20 818.06 L1676.68 820.93 L1686.16 823.80 L1695.64 820.93 L1705.12 823.80 L1714.60 818.06 L1724.08 820.93 L1733.56 823.80 L1743.04 815.18 L1752.52 823.80 L1762.00 815.18 L1771.48 818.06 L1780.96 823.80 L1790.44 820.93 L1799.92 818.06 L1809.40 815.18 L1818.88 820.93 L1828.36 820.93 L1837.84 809.44 L1847.32 820.93 L1856.80 818.06 L1866.28 820.93 L1875.76 826.67 L1885.24 815.18" fill="none" stroke="#ee8548" stroke-width="2.3" stroke-linejoin="round"/><path d="M1320.00 835.29 L1325.92 835.29 L1335.40 826.67 L1344.88 835.29 L1354.36 835.29 L1363.84 835.29 L1373.32 835.29 L1382.80 829.55 L1392.28 838.16 L1401.76 838.16 L1411.24 838.16 L1420.72 838.16 L1430.20 829.55 L1439.68 835.29 L1449.16 835.29 L1458.64 835.29 L1468.12 835.29 L1477.60 826.67 L1487.08 838.16 L1496.56 838.16 L1506.04 838.16 L1515.52 838.16 L1525.00 829.55 L1534.48 838.16 L1543.96 838.16 L1553.44 838.16 L1562.92 835.29 L1572.40 826.67 L1581.88 835.29 L1591.36 835.29 L1600.84 835.29 L1610.32 835.29 L1619.80 829.55 L1629.28 838.16 L1638.76 838.16 L1648.24 838.16 L1657.72 838.16 L1667.20 829.55 L1676.68 838.16 L1686.16 838.16 L1695.64 838.16 L1705.12 838.16 L1714.60 829.55 L1724.08 838.16 L1733.56 838.16 L1743.04 838.16 L1752.52 838.16 L1762.00 835.29 L1771.48 838.16 L1780.96 838.16 L1790.44 835.29 L1799.92 835.29 L1809.40 829.55 L1818.88 835.29 L1828.36 835.29 L1837.84 832.42 L1847.32 832.42 L1856.80 823.80 L1866.28 832.42 L1875.76 832.42 L1885.24 835.29" fill="none" stroke="#7a56a6" stroke-width="2.3" stroke-linejoin="round"/></g><text x="1313.70" y="744.20" font-size="12.60" text-anchor="end" fill="#41474f" textLength="14.40" lengthAdjust="spacing" stroke="#41474f" stroke-width="0.20" >50</text><text x="1313.70" y="772.90" font-size="12.60" text-anchor="end" fill="#41474f" textLength="14.40" lengthAdjust="spacing" stroke="#41474f" stroke-width="0.20" >40</text><text x="1313.70" y="801.65" font-size="12.60" text-anchor="end" fill="#41474f" textLength="14.40" lengthAdjust="spacing" stroke="#41474f" stroke-width="0.20" >30</text><text x="1313.70" y="830.40" font-size="12.60" text-anchor="end" fill="#41474f" textLength="14.40" lengthAdjust="spacing" stroke="#41474f" stroke-width="0.20" >20</text><text x="1313.70" y="859.10" font-size="12.60" text-anchor="end" fill="#41474f" textLength="14.40" lengthAdjust="spacing" stroke="#41474f" stroke-width="0.20" >10</text><text x="1364.40" y="874.70" font-size="12.60" text-anchor="middle" fill="#41474f" textLength="31.60" lengthAdjust="spacing" stroke="#41474f" stroke-width="0.20" >12:40</text><text x="1459.20" y="874.70" font-size="12.60" text-anchor="middle" fill="#41474f" textLength="31.60" lengthAdjust="spacing" stroke="#41474f" stroke-width="0.20" >12:50</text><text x="1554.00" y="874.70" font-size="12.60" text-anchor="middle" fill="#41474f" textLength="31.60" lengthAdjust="spacing" stroke="#41474f" stroke-width="0.20" >13:00</text><text x="1648.80" y="874.70" font-size="12.60" text-anchor="middle" fill="#41474f" textLength="31.60" lengthAdjust="spacing" stroke="#41474f" stroke-width="0.20" >13:10</text><text x="1743.60" y="874.70" font-size="12.60" text-anchor="middle" fill="#41474f" textLength="31.60" lengthAdjust="spacing" stroke="#41474f" stroke-width="0.20" >13:20</text><text x="1838.40" y="874.70" font-size="12.60" text-anchor="middle" fill="#41474f" textLength="31.60" lengthAdjust="spacing" stroke="#41474f" stroke-width="0.20" >13:30</text></svg></section>
<div class="box" style="left:0;top:3.2px;width:16px;height:879px;background:linear-gradient(90deg,rgba(70,72,80,.33) 0,rgba(70,72,80,.24) 2.5px,rgba(70,72,80,.12) 4.5px,rgba(70,72,80,.05) 6.5px,rgba(70,72,80,.02) 8.5px,rgba(70,72,80,0) 12px)"></div>
<div class="box" style="left:0;top:872px;width:1911px;height:10px;background:linear-gradient(180deg,rgba(0,0,0,0),rgba(0,0,0,.022))"></div>
<svg class="ov" width="1911" height="882" viewBox="0 0 1911 882" style="pointer-events:none"><rect x="0" y="0" width="1911" height="1.9" fill="#fff"/><rect x="0" y="1.75" width="1911" height="1.5" fill="#5b5b5b"/><circle cx="-0.3" cy="2.4" r="7.1" fill="#fff" stroke="#5b5b5b" stroke-width="2.9"/><circle cx="957.4" cy="2.4" r="7.1" fill="#fff" stroke="#5b5b5b" stroke-width="2.9"/><circle cx="1915.5" cy="2.4" r="7.1" fill="#fff" stroke="#5b5b5b" stroke-width="2.9"/><circle cx="-0.3" cy="447.7" r="7.1" fill="#fff" stroke="#5b5b5b" stroke-width="2.9"/><circle cx="1915.5" cy="447.7" r="7.1" fill="#fff" stroke="#5b5b5b" stroke-width="2.9"/></svg>
</div>
</body></html>
